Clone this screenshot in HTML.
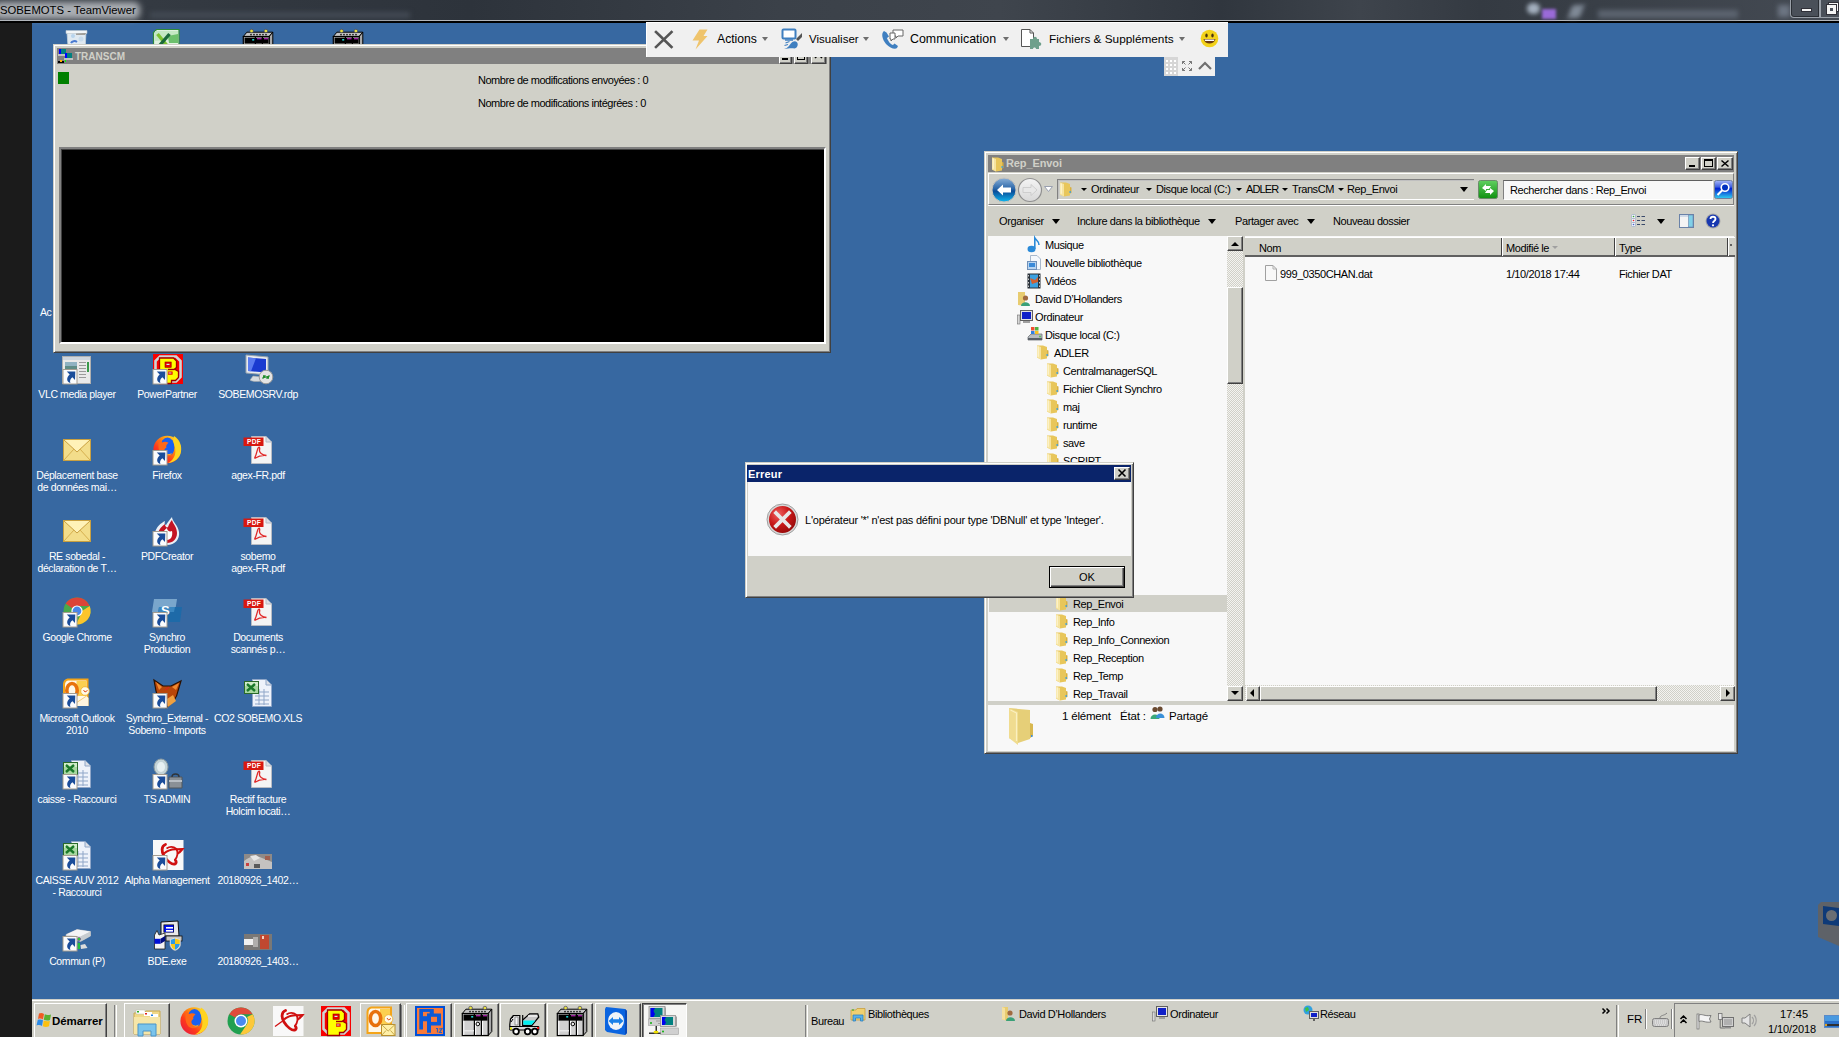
<!DOCTYPE html>
<html><head><meta charset="utf-8">
<style>
*{box-sizing:border-box}
html,body{margin:0;padding:0}
body{width:1839px;height:1037px;overflow:hidden;position:relative;background:#3768a1;font-family:"Liberation Sans",sans-serif;font-size:11px;color:#000}
.a{position:absolute}
.t{position:absolute;white-space:nowrap;font-size:11px;line-height:11px;letter-spacing:-0.4px}
svg{position:absolute;overflow:visible}
.win{background:#d0d0c8;border-top:1px solid #d0d0c8;border-left:1px solid #d0d0c8;border-right:1px solid #404040;border-bottom:1px solid #404040;box-shadow:inset 1px 1px 0 #fff,inset -1px -1px 0 #808080}
.title{background:#808080}
.tb{position:absolute;background:#d0d0c8;border-top:1px solid #fff;border-left:1px solid #fff;border-right:1px solid #404040;border-bottom:1px solid #404040;box-shadow:inset -1px -1px 0 #808080}
.sunk{position:absolute;border-top:1px solid #808080;border-left:1px solid #808080;border-right:1px solid #fff;border-bottom:1px solid #fff}
.lbl{position:absolute;color:#fff;font-size:10.5px;line-height:12px;text-align:center;width:100px;white-space:nowrap;letter-spacing:-0.38px}
.tvt{position:absolute;white-space:nowrap;font-size:12px;line-height:12px;color:#000}
.tri{position:absolute;width:0;height:0;border-left:3.5px solid transparent;border-right:3.5px solid transparent;border-top:4px solid #6d6d6d}
.btri{position:absolute;width:0;height:0;border-left:4px solid transparent;border-right:4px solid transparent;border-top:4px solid #000}
.nav{position:absolute;white-space:nowrap;font-size:11px;line-height:11px;letter-spacing:-0.4px}
</style></head><body>
<!-- ===== TOP BAR ===== -->
<div class="a" style="left:0;top:0;width:1839px;height:20px;background:linear-gradient(90deg,#3a3f47 0px,#343a42 150px,#2d333b 470px,#3b4149 780px,#3f454d 1000px,#30363e 1220px,#3e444c 1360px,#343a42 1480px,#3a4048 1620px,#454b54 1839px)"></div>
<div class="a" style="left:-6px;top:2px;width:146px;height:17px;background:#aaaeb3;filter:blur(3px);border-radius:6px"></div>
<div class="t" style="left:0;top:5px;font-size:11.3px;letter-spacing:0;color:#000">SOBEMOTS - TeamViewer</div>
<div class="a" style="left:0;top:20px;width:1839px;height:1px;background:#b2b6bb"></div>
<div class="a" style="left:0;top:21px;width:1839px;height:2px;background:#000"></div>
<div class="a" style="left:0;top:23px;width:32px;height:1014px;background:#1b1b1b"></div>
<!-- blurred tray items top right -->
<div class="a" style="left:150px;top:12px;width:260px;height:6px;background:#434a54;filter:blur(2.5px)"></div>
<div class="a" style="left:1527px;top:3px;width:13px;height:11px;border-radius:6px;background:#a4b0bf;filter:blur(2px)"></div>
<div class="a" style="left:1542px;top:9px;width:14px;height:10px;background:#9a6ad8;filter:blur(1.5px)"></div>
<div class="a" style="left:1570px;top:5px;width:12px;height:13px;background:#7f8996;filter:blur(2.5px);transform:skewX(-20deg)"></div>
<div class="a" style="left:1598px;top:10px;width:140px;height:8px;background:#5c6470;filter:blur(2.5px)"></div>
<div class="a" style="left:1778px;top:5px;width:12px;height:12px;background:#6c7582;filter:blur(2.5px)"></div>
<!-- min / restore buttons -->
<div class="a" style="left:1790px;top:-4px;width:30px;height:22px;border:1px solid #9aa0a8;border-top:none;border-radius:0 0 0 4px;background:#4a5059;box-shadow:inset 0 0 0 1px #2a2e34"></div>
<div class="a" style="left:1801px;top:8px;width:11px;height:4px;background:#f4f4f4;border:1px solid #303038"></div>
<div class="a" style="left:1820px;top:-4px;width:22px;height:22px;border:1px solid #9aa0a8;border-top:none;background:#4a5059"></div>
<div class="a" style="left:1829px;top:3px;width:9px;height:8px;border:2px solid #f4f4f4;border-left-width:2px;box-shadow:0 0 0 1px #303038"></div>
<div class="a" style="left:1827px;top:5px;width:9px;height:9px;border:3px solid #f4f4f4;background:#4a5059;box-shadow:0 0 0 1px #303038"></div>

<!-- ===== DESKTOP ICONS (top peeks) ===== -->
<svg style="left:61px;top:353px" width="32" height="32" viewBox="0 0 32 32"><rect x="1.5" y="3.5" width="28" height="27" fill="#e9e9e9" stroke="#b0b0b0"/><rect x="2" y="4" width="27" height="3" fill="#cfd6de"/><rect x="4" y="9" width="12" height="12" fill="#5e8c86"/><rect x="4" y="9" width="12" height="4" fill="#8fb2c2"/><g fill="#9a9a9a"><rect x="18" y="9" width="7" height="1"/><rect x="18" y="12" width="7" height="1"/><rect x="18" y="15" width="7" height="1"/><rect x="18" y="18" width="7" height="1"/><rect x="18" y="21" width="7" height="1"/><rect x="18" y="24" width="7" height="1"/></g><rect x="26" y="9" width="2" height="10" fill="#3a9a4a"/><g><rect x="2" y="16.5" width="14" height="14.5" fill="#fbfcfd" stroke="#a49c90" stroke-width="1"/><path d="M5.8 18.6 L14.3 18.6 L14 27 L11.4 24.2 C9.2 25.8 8.6 27.8 9.4 30 C5.6 29 4.9 25 8.7 21.6 Z" fill="#1b4d9a"/></g></svg>
<div class="lbl" style="left:27px;top:388px">VLC media player</div>
<svg style="left:61px;top:434px" width="32" height="32" viewBox="0 0 32 32"><rect x="2.5" y="5.5" width="27" height="21" fill="#f3dd8a" stroke="#c9a040"/><path d="M3 6 L16 18 L29 6" fill="#fff2b8" stroke="#c9a040"/><path d="M3 26 L13 15 M29 26 L19 15" stroke="#d6b050" fill="none"/></svg>
<div class="lbl" style="left:27px;top:469px">Déplacement base<br>de données mai…</div>
<svg style="left:61px;top:515px" width="32" height="32" viewBox="0 0 32 32"><rect x="2.5" y="5.5" width="27" height="21" fill="#f3dd8a" stroke="#c9a040"/><path d="M3 6 L16 18 L29 6" fill="#fff2b8" stroke="#c9a040"/><path d="M3 26 L13 15 M29 26 L19 15" stroke="#d6b050" fill="none"/></svg>
<div class="lbl" style="left:27px;top:550px">RE sobedal -<br>déclaration de T…</div>
<svg style="left:61px;top:596px" width="32" height="32" viewBox="0 0 32 32"><circle cx="16" cy="15" r="13.5" fill="#4aa84a"/><path d="M16 1.5 A13.5 13.5 0 0 1 28.7 10 L16 10 A5 5 0 0 0 11.5 12.5 L4.6 7.6 A13.5 13.5 0 0 1 16 1.5Z" fill="#dc4438"/><path d="M28.7 10 A13.5 13.5 0 0 1 15 28.5 L20.3 17.5 A5 5 0 0 0 21 15 Z" fill="#fbc42c"/><circle cx="16" cy="15" r="5.6" fill="#fff"/><circle cx="16" cy="15" r="4.4" fill="#4a86e8"/><g><rect x="2" y="16.5" width="14" height="14.5" fill="#fbfcfd" stroke="#a49c90" stroke-width="1"/><path d="M5.8 18.6 L14.3 18.6 L14 27 L11.4 24.2 C9.2 25.8 8.6 27.8 9.4 30 C5.6 29 4.9 25 8.7 21.6 Z" fill="#1b4d9a"/></g></svg>
<div class="lbl" style="left:27px;top:631px">Google Chrome</div>
<svg style="left:61px;top:677px" width="32" height="32" viewBox="0 0 32 32"><g transform="translate(1.5,1)"><path d="M5 0.5 L26 0.5 L26 28 L0.5 28 L0.5 6 C0.5 3 2.5 1 5 0.5Z" fill="#f4a418"/><path d="M5.5 2.5 L24 2.5 L24 26 L2.5 26 L2.5 7 C2.5 4.5 3.5 3 5.5 2.5Z" fill="#fff8e8"/><path d="M14 3 L24 3 L24 18 L14 18Z" fill="#fcd050"/><ellipse cx="9.5" cy="12.5" rx="5.2" ry="7" fill="none" stroke="#e8720c" stroke-width="3.6"/><circle cx="22.5" cy="13" r="4.3" fill="#fffbe8" stroke="#f0b030" stroke-width=".8"/><path d="M21 12 L22.5 14 L25 12.5" stroke="#e05020" stroke-width="1" fill="none"/><path d="M12 26 L24 18 L26 20 L26 28 L12 28Z" fill="#fff6e0"/><path d="M12 26 L24 18" stroke="#f0c060" stroke-width=".8"/></g><g><rect x="2" y="16.5" width="14" height="14.5" fill="#fbfcfd" stroke="#a49c90" stroke-width="1"/><path d="M5.8 18.6 L14.3 18.6 L14 27 L11.4 24.2 C9.2 25.8 8.6 27.8 9.4 30 C5.6 29 4.9 25 8.7 21.6 Z" fill="#1b4d9a"/></g></svg>
<div class="lbl" style="left:27px;top:712px">Microsoft Outlook<br>2010</div>
<svg style="left:61px;top:758px" width="32" height="32" viewBox="0 0 32 32"><path d="M10.5 2.5 L24 2.5 L29.5 8 L29.5 29.5 L10.5 29.5Z" fill="#eef2fa" stroke="#8fa6c8"/><path d="M24 2.5 L24 8 L29.5 8" fill="#dde0e6" stroke="#8fa6c8"/><g stroke="#8fa6c8" stroke-width="1"><path d="M13 15 L27 15 M13 19 L27 19 M13 23 L27 23 M13 27 L27 27 M17 12 L17 28 M22 12 L22 28"/></g><rect x="2.5" y="4.5" width="14" height="12" fill="#a8d8a0" stroke="#2a6a2a"/><rect x="3" y="5" width="13" height="4" fill="#d0ecc8"/><path d="M5 7 L13 14 M13 7 L5 14" stroke="#1a7a2a" stroke-width="2.4"/><g><rect x="2" y="16.5" width="14" height="14.5" fill="#fbfcfd" stroke="#a49c90" stroke-width="1"/><path d="M5.8 18.6 L14.3 18.6 L14 27 L11.4 24.2 C9.2 25.8 8.6 27.8 9.4 30 C5.6 29 4.9 25 8.7 21.6 Z" fill="#1b4d9a"/></g></svg>
<div class="lbl" style="left:27px;top:793px">caisse - Raccourci</div>
<svg style="left:61px;top:839px" width="32" height="32" viewBox="0 0 32 32"><path d="M10.5 2.5 L24 2.5 L29.5 8 L29.5 29.5 L10.5 29.5Z" fill="#eef2fa" stroke="#8fa6c8"/><path d="M24 2.5 L24 8 L29.5 8" fill="#dde0e6" stroke="#8fa6c8"/><g stroke="#8fa6c8" stroke-width="1"><path d="M13 15 L27 15 M13 19 L27 19 M13 23 L27 23 M13 27 L27 27 M17 12 L17 28 M22 12 L22 28"/></g><rect x="2.5" y="4.5" width="14" height="12" fill="#a8d8a0" stroke="#2a6a2a"/><rect x="3" y="5" width="13" height="4" fill="#d0ecc8"/><path d="M5 7 L13 14 M13 7 L5 14" stroke="#1a7a2a" stroke-width="2.4"/><g><rect x="2" y="16.5" width="14" height="14.5" fill="#fbfcfd" stroke="#a49c90" stroke-width="1"/><path d="M5.8 18.6 L14.3 18.6 L14 27 L11.4 24.2 C9.2 25.8 8.6 27.8 9.4 30 C5.6 29 4.9 25 8.7 21.6 Z" fill="#1b4d9a"/></g></svg>
<div class="lbl" style="left:27px;top:874px">CAISSE AUV 2012<br>- Raccourci</div>
<svg style="left:61px;top:920px" width="32" height="32" viewBox="0 0 32 32"><path d="M5 14.5 L16 9.5 L29.5 11.5 L29.5 16 L19.5 21.5 L5 17Z" fill="#d8dade" stroke="#b0b4b8" stroke-width=".6"/><path d="M5 14.5 L16 9.5 L29.5 11.5 L19.5 16.5Z" fill="#f4f4f6"/><path d="M19.5 16.5 L29.5 11.5 L29.5 16 L19.5 21.5Z" fill="#c8ccd0"/><circle cx="18" cy="19" r="1.6" fill="#30d030" stroke="#6a2a8a" stroke-width=".5"/><path d="M16.5 23 L16.5 29 L19 29 L19 23Z" fill="#20c040"/><path d="M19.5 25 L24 24 L26.5 28 L20 29Z" fill="#dcdcdc"/><g><rect x="2" y="16.5" width="14" height="14.5" fill="#fbfcfd" stroke="#a49c90" stroke-width="1"/><path d="M5.8 18.6 L14.3 18.6 L14 27 L11.4 24.2 C9.2 25.8 8.6 27.8 9.4 30 C5.6 29 4.9 25 8.7 21.6 Z" fill="#1b4d9a"/></g></svg>
<div class="lbl" style="left:27px;top:955px">Commun (P)</div>
<svg style="left:151px;top:353px" width="32" height="32" viewBox="0 0 32 32"><rect x="2" y="1" width="30" height="30" fill="#f80000"/><path d="M9 3.5 L25 3.5 L29.5 8 L29.5 24 L25 28.5 L9 28.5 L4.5 24 L4.5 8Z" fill="none" stroke="#cfd4d4" stroke-width="2.6"/><path d="M8.5 5 L22.5 5 L25.5 8 L25.5 14.5 L23.5 16.2 L27.5 18.5 L27.5 24.5 L24.5 27.5 L20.5 27.5 L20.5 30.5 L8.5 30.5 Z" fill="#ffff00" stroke="#a00000" stroke-width="1.3"/><rect x="14" y="9" width="6.2" height="5.3" fill="#e80000" stroke="#900000" stroke-width=".6"/><rect x="15.5" y="10.8" width="3" height="1.2" fill="#c8f0f0"/><path d="M17 16.5 L23.5 16.5" stroke="#a00000" stroke-width="1.4"/><rect x="17" y="18.5" width="4.6" height="3.2" fill="#e80000"/><rect x="17.5" y="19.5" width="3" height="1" fill="#c8f0f0"/><g><rect x="2" y="16.5" width="14" height="14.5" fill="#fbfcfd" stroke="#a49c90" stroke-width="1"/><path d="M5.8 18.6 L14.3 18.6 L14 27 L11.4 24.2 C9.2 25.8 8.6 27.8 9.4 30 C5.6 29 4.9 25 8.7 21.6 Z" fill="#1b4d9a"/></g></svg>
<div class="lbl" style="left:117px;top:388px">PowerPartner</div>
<svg style="left:151px;top:434px" width="32" height="32" viewBox="0 0 32 32"><g transform="translate(2,0.5)"><defs><linearGradient id="fxa" x1="0" y1="1" x2="1" y2="0"><stop offset="0" stop-color="#e0104a"/><stop offset=".35" stop-color="#ff3a1a"/><stop offset=".65" stop-color="#ff9a10"/><stop offset="1" stop-color="#fff040"/></linearGradient></defs><circle cx="14.2" cy="15" r="13.8" fill="url(#fxa)"/><ellipse cx="14.5" cy="12.5" rx="7" ry="9.5" fill="#1a60f0"/><path d="M21 1.5 C27 5 29 12 28 17 C27 24 21 28 15 28.5 C20 26 23 21 22.3 15 C21.8 10 19 7 21 1.5Z" fill="#ffd420"/><path d="M6.5 5 L9 8 C11 7 13.5 7 15.5 8.2 C14 10 12.5 11 13.5 13 C11.5 14 10.5 16 12.5 18.5 C14.5 20.5 18 20.5 20.5 19.5 C17.5 22.5 12 23.5 8.5 20.5 C5.5 17 4.5 11 6.5 5Z" fill="#ff6818"/><path d="M12 18.5 C14 20 17 20 19 18.5 C18 21 15 21.5 12 18.5Z" fill="#ffb020"/></g><g><rect x="2" y="16.5" width="14" height="14.5" fill="#fbfcfd" stroke="#a49c90" stroke-width="1"/><path d="M5.8 18.6 L14.3 18.6 L14 27 L11.4 24.2 C9.2 25.8 8.6 27.8 9.4 30 C5.6 29 4.9 25 8.7 21.6 Z" fill="#1b4d9a"/></g></svg>
<div class="lbl" style="left:117px;top:469px">Firefox</div>
<svg style="left:151px;top:515px" width="32" height="32" viewBox="0 0 32 32"><path d="M16 30 C7 30 3 24 4 18 C5 12 10 8 14 6 C13 9 14 10 15 10 C17 7 19 4 21 2 C21 6 27 10 28 17 C29 24 24 30 16 30Z" fill="#fff" opacity=".9"/><path d="M16 28 C9 28 6 23 7 18 C8 14 11 11 14 9 C14 12 16 13 17 12 C18 9 20 6 21 5 C22 9 26 12 26 18 C26 24 22 28 16 28Z" fill="#c41424"/><path d="M16 25 C12 25 10 22 11 19 C12 16 14 15 16 13 C16 16 19 17 21 16 C22 21 20 25 16 25Z" fill="#fff"/><g><rect x="2" y="16.5" width="14" height="14.5" fill="#fbfcfd" stroke="#a49c90" stroke-width="1"/><path d="M5.8 18.6 L14.3 18.6 L14 27 L11.4 24.2 C9.2 25.8 8.6 27.8 9.4 30 C5.6 29 4.9 25 8.7 21.6 Z" fill="#1b4d9a"/></g></svg>
<div class="lbl" style="left:117px;top:550px">PDFCreator</div>
<svg style="left:151px;top:596px" width="32" height="32" viewBox="0 0 32 32"><path d="M3 3 L26 3 L24 16 L1 16Z" fill="#7aa6cc"/><path d="M8 11 L31 11 L29 26 L6 26Z" fill="#1e6aa8"/><path d="M8 11 L24 11 L23 16 L7 16Z" fill="#3a86c0"/><text x="10" y="19" font-family="Liberation Sans" font-weight="bold" font-size="13" fill="#fff">S</text><g><rect x="2" y="16.5" width="14" height="14.5" fill="#fbfcfd" stroke="#a49c90" stroke-width="1"/><path d="M5.8 18.6 L14.3 18.6 L14 27 L11.4 24.2 C9.2 25.8 8.6 27.8 9.4 30 C5.6 29 4.9 25 8.7 21.6 Z" fill="#1b4d9a"/></g></svg>
<div class="lbl" style="left:117px;top:631px">Synchro<br>Production</div>
<svg style="left:151px;top:677px" width="32" height="32" viewBox="0 0 32 32"><path d="M3 3 L12 9 L20 9 L30 4 L27 14 C26 20 22 26 15 31 C12 26 6 20 5 14Z" fill="#b8460a" stroke="#2a1000" stroke-width="1.2"/><path d="M5 5 L11 10 L8 13Z" fill="#f08a30"/><path d="M28 6 L21 10 L25 13Z" fill="#f08a30"/><path d="M16 22 L22 18 L25 24 L17 30Z" fill="#f0a040"/><path d="M14 13 L18 10" stroke="#e02020" stroke-width="1"/><g><rect x="2" y="16.5" width="14" height="14.5" fill="#fbfcfd" stroke="#a49c90" stroke-width="1"/><path d="M5.8 18.6 L14.3 18.6 L14 27 L11.4 24.2 C9.2 25.8 8.6 27.8 9.4 30 C5.6 29 4.9 25 8.7 21.6 Z" fill="#1b4d9a"/></g></svg>
<div class="lbl" style="left:117px;top:712px">Synchro_External -<br>Sobemo - Imports</div>
<svg style="left:151px;top:758px" width="32" height="32" viewBox="0 0 32 32"><ellipse cx="10" cy="9" rx="7" ry="8" fill="#c4d4d8" stroke="#8a9aa0"/><ellipse cx="10" cy="9" rx="4" ry="5" fill="#e6f0f2"/><path d="M18 19 L31 19 L31 30 L18 30Z" fill="#8a9096" stroke="#50565c"/><path d="M21 19 C21 15 28 15 28 19" fill="none" stroke="#303438" stroke-width="1.4"/><rect x="18" y="22" width="13" height="2" fill="#b8bec4"/><g><rect x="2" y="16.5" width="14" height="14.5" fill="#fbfcfd" stroke="#a49c90" stroke-width="1"/><path d="M5.8 18.6 L14.3 18.6 L14 27 L11.4 24.2 C9.2 25.8 8.6 27.8 9.4 30 C5.6 29 4.9 25 8.7 21.6 Z" fill="#1b4d9a"/></g></svg>
<div class="lbl" style="left:117px;top:793px">TS ADMIN</div>
<svg style="left:151px;top:839px" width="32" height="32" viewBox="0 0 32 32"><g transform="translate(2,1)"><rect x="0" y="0" width="30.5" height="30" fill="#f8f8f8"/><path d="M12.5 4.5 C8 6 8.5 12 11 16 C14 21 19 25 22 24 C23.5 23 23.5 21.5 22.5 20.5" stroke="#d01010" stroke-width="2.8" fill="none" stroke-linecap="round"/><path d="M2 20.5 L11 14" stroke="#d01010" stroke-width="1.3"/><path d="M11 13.5 C15 10 20 9 24 9.3 C27 9 29 9 29.5 9 C28 11 26.5 12.5 24.5 13.5" stroke="#d01010" stroke-width="2.2" fill="none"/><path d="M13.5 8.5 C16.5 6.5 20.5 6.5 23.5 9 C25 12 25 17 21.5 20.5" stroke="#d01010" stroke-width="1.8" fill="none"/></g><g><rect x="2" y="16.5" width="14" height="14.5" fill="#fbfcfd" stroke="#a49c90" stroke-width="1"/><path d="M5.8 18.6 L14.3 18.6 L14 27 L11.4 24.2 C9.2 25.8 8.6 27.8 9.4 30 C5.6 29 4.9 25 8.7 21.6 Z" fill="#1b4d9a"/></g></svg>
<div class="lbl" style="left:117px;top:874px">Alpha Management</div>
<svg style="left:151px;top:920px" width="32" height="32" viewBox="0 0 32 32"><path d="M10 2 L27 1 L28 16 L10 16Z" fill="#e8e8e8" stroke="#101010" stroke-width="1"/><rect x="12.5" y="4.5" width="10.5" height="8" fill="#000"/><rect x="13.2" y="5.2" width="9.3" height="7" fill="#0010f0"/><rect x="15" y="7" width="7" height="1.6" fill="#fff"/><rect x="15" y="10" width="7" height="1.6" fill="#fff"/><rect x="15" y="16" width="16" height="5" fill="#c8c8c8" stroke="#101010" stroke-width=".8"/><path d="M3.5 15 L6 10.5 L8 15 L14 13 L14 29 L3.5 29Z" fill="#f4f4f4" stroke="#202020" stroke-width=".8"/><rect x="3.5" y="18.8" width="6" height="5" fill="#0010d8"/><path d="M9.5 18.8 L14 16 L14 21 L9.5 23.8Z" fill="#000a80"/><path d="M19 19 L24 17.5 L29.5 19 L29.5 25 C29 28 26 30 24 30.5 C22 30 19.5 28 19 25Z" fill="#f0f0f0" stroke="#c0c0c0" stroke-width=".6"/><path d="M19.8 19.8 L24 18.5 L24 24 L19.8 24Z M24 24 L28.8 24 C28.5 27 26 29 24 29.7Z" fill="#2a9ae8"/><path d="M24 18.5 L28.8 19.8 L28.8 24 L24 24Z M19.8 24 L24 24 L24 29.7 C22 29 20 27 19.8 24Z" fill="#f8c818"/></svg>
<div class="lbl" style="left:117px;top:955px">BDE.exe</div>
<svg style="left:242px;top:353px" width="32" height="32" viewBox="0 0 32 32"><path d="M4 2 L26 4 L26 22 L4 20Z" fill="#e8ecf0" stroke="#9aa4ae"/><path d="M6 4.5 L24 6 L24 19.5 L6 18Z" fill="#1a3bd0"/><path d="M6 4.5 L14 5.2 L9 18.3 L6 18Z" fill="#5a7cf0"/><path d="M11 23 L20 24 L22 27 C18 29 10 29 8 27Z" fill="#d8dce0" stroke="#a0a4a8" stroke-width=".6"/><circle cx="24" cy="24" r="6.8" fill="#e4e4e4" stroke="#9a9a9a"/><path d="M20.5 25.5 L23 23 M25 25 L27.5 22.5 M21 23 L23 23 L23 25 M27 25 L25 25 L25 23" stroke="#1e8c2a" stroke-width="1.4" fill="none"/></svg>
<div class="lbl" style="left:208px;top:388px">SOBEMOSRV.rdp</div>
<svg style="left:242px;top:434px" width="32" height="32" viewBox="0 0 32 32"><path d="M9.5 2.5 L24 2.5 L29.5 8 L29.5 29.5 L9.5 29.5Z" fill="#f4f4f4" stroke="#b8bcc4"/><path d="M24 2.5 L24 8 L29.5 8" fill="#dde0e6" stroke="#b8bcc4"/><rect x="1.5" y="3.5" width="20" height="8.5" fill="#d81810"/><text x="5" y="10.3" font-family="Liberation Sans" font-weight="bold" font-size="6.6" fill="#fff" letter-spacing="0.3">PDF</text><path d="M16.5 13.5 C15 15 15.5 18 12.5 24.5 M16.5 13.5 C17.5 12.5 18 14 17.5 16 C17 18.5 20 21 24.5 21.5 C21 21 16.5 22 12.5 24.5" stroke="#e02828" stroke-width="1.3" fill="none"/></svg>
<div class="lbl" style="left:208px;top:469px">agex-FR.pdf</div>
<svg style="left:242px;top:515px" width="32" height="32" viewBox="0 0 32 32"><path d="M9.5 2.5 L24 2.5 L29.5 8 L29.5 29.5 L9.5 29.5Z" fill="#f4f4f4" stroke="#b8bcc4"/><path d="M24 2.5 L24 8 L29.5 8" fill="#dde0e6" stroke="#b8bcc4"/><rect x="1.5" y="3.5" width="20" height="8.5" fill="#d81810"/><text x="5" y="10.3" font-family="Liberation Sans" font-weight="bold" font-size="6.6" fill="#fff" letter-spacing="0.3">PDF</text><path d="M16.5 13.5 C15 15 15.5 18 12.5 24.5 M16.5 13.5 C17.5 12.5 18 14 17.5 16 C17 18.5 20 21 24.5 21.5 C21 21 16.5 22 12.5 24.5" stroke="#e02828" stroke-width="1.3" fill="none"/></svg>
<div class="lbl" style="left:208px;top:550px">sobemo<br>agex-FR.pdf</div>
<svg style="left:242px;top:596px" width="32" height="32" viewBox="0 0 32 32"><path d="M9.5 2.5 L24 2.5 L29.5 8 L29.5 29.5 L9.5 29.5Z" fill="#f4f4f4" stroke="#b8bcc4"/><path d="M24 2.5 L24 8 L29.5 8" fill="#dde0e6" stroke="#b8bcc4"/><rect x="1.5" y="3.5" width="20" height="8.5" fill="#d81810"/><text x="5" y="10.3" font-family="Liberation Sans" font-weight="bold" font-size="6.6" fill="#fff" letter-spacing="0.3">PDF</text><path d="M16.5 13.5 C15 15 15.5 18 12.5 24.5 M16.5 13.5 C17.5 12.5 18 14 17.5 16 C17 18.5 20 21 24.5 21.5 C21 21 16.5 22 12.5 24.5" stroke="#e02828" stroke-width="1.3" fill="none"/></svg>
<div class="lbl" style="left:208px;top:631px">Documents<br>scannés p…</div>
<svg style="left:242px;top:677px" width="32" height="32" viewBox="0 0 32 32"><path d="M10.5 2.5 L24 2.5 L29.5 8 L29.5 29.5 L10.5 29.5Z" fill="#eef2fa" stroke="#8fa6c8"/><path d="M24 2.5 L24 8 L29.5 8" fill="#dde0e6" stroke="#8fa6c8"/><g stroke="#8fa6c8" stroke-width="1"><path d="M13 15 L27 15 M13 19 L27 19 M13 23 L27 23 M13 27 L27 27 M17 12 L17 28 M22 12 L22 28"/></g><rect x="2.5" y="4.5" width="14" height="12" fill="#a8d8a0" stroke="#2a6a2a"/><rect x="3" y="5" width="13" height="4" fill="#d0ecc8"/><path d="M5 7 L13 14 M13 7 L5 14" stroke="#1a7a2a" stroke-width="2.4"/></svg>
<div class="lbl" style="left:208px;top:712px">CO2 SOBEMO.XLS</div>
<svg style="left:242px;top:758px" width="32" height="32" viewBox="0 0 32 32"><path d="M9.5 2.5 L24 2.5 L29.5 8 L29.5 29.5 L9.5 29.5Z" fill="#f4f4f4" stroke="#b8bcc4"/><path d="M24 2.5 L24 8 L29.5 8" fill="#dde0e6" stroke="#b8bcc4"/><rect x="1.5" y="3.5" width="20" height="8.5" fill="#d81810"/><text x="5" y="10.3" font-family="Liberation Sans" font-weight="bold" font-size="6.6" fill="#fff" letter-spacing="0.3">PDF</text><path d="M16.5 13.5 C15 15 15.5 18 12.5 24.5 M16.5 13.5 C17.5 12.5 18 14 17.5 16 C17 18.5 20 21 24.5 21.5 C21 21 16.5 22 12.5 24.5" stroke="#e02828" stroke-width="1.3" fill="none"/></svg>
<div class="lbl" style="left:208px;top:793px">Rectif facture<br>Holcim locati…</div>
<svg style="left:242px;top:839px" width="32" height="32" viewBox="0 0 32 32"><rect x="2" y="15" width="28" height="15" fill="#8e8a88"/><path d="M2 22 C8 17 14 16 20 19 L30 23 L30 30 L2 30Z" fill="#c4c2c0"/><path d="M8 17 L14 16 L18 19 L12 22Z" fill="#e8e6e4"/><rect x="4" y="24" width="3" height="3" fill="#c84040"/><rect x="23" y="17" width="5" height="4" fill="#a06050"/><rect x="12" y="25" width="6" height="4" fill="#5a5a5a"/></svg>
<div class="lbl" style="left:208px;top:874px">20180926_1402…</div>
<svg style="left:242px;top:920px" width="32" height="32" viewBox="0 0 32 32"><rect x="2" y="14" width="28" height="16" fill="#7a7876"/><rect x="2" y="19" width="9" height="6" fill="#f0f0f0"/><rect x="11" y="17" width="5" height="10" fill="#b0aeac"/><rect x="18" y="15" width="9" height="14" fill="#c04830"/><rect x="20" y="16" width="2" height="3" fill="#f0d0c0"/></svg>
<div class="lbl" style="left:208px;top:955px">20180926_1403…</div>
<svg style="left:61px;top:29px" width="32" height="32" viewBox="0 0 32 32"><path d="M6 3 L25 3 L23.5 31 L8 31Z" fill="#dfe9f1" stroke="#c8d4dc" stroke-width=".8"/><path d="M5 1.5 L26 1.5 L26 4.5 L5 4.5Z" fill="#f2f6f8" stroke="#b8c4cc" stroke-width=".6"/><path d="M15 4.5 L25 4 L24 6 L15 6Z" fill="#7a7060" opacity=".6"/><circle cx="12" cy="7" r="2" fill="#b8d4ec"/><circle cx="20" cy="10" r="2.5" fill="#c8dcec"/><path d="M10 14 C11 12 14 11.5 16 13" stroke="#4a7ad0" stroke-width="2" fill="none"/></svg>
<svg style="left:151px;top:29px" width="32" height="32" viewBox="0 0 32 32"><path d="M5.5 0.5 L28 0.5 L28 32 L2.5 32 L2.5 3.5 Z" fill="#dff2df" stroke="#2f8a3a" stroke-width="1.2"/><path d="M4 2 L27 2 L27 10 L4 12Z" fill="#c4e8c4"/><path d="M17 7 L27 5 L27 14 L18 14Z" fill="#6cc06c"/><path d="M6.5 5 L15.5 16" stroke="#7cc230" stroke-width="3.4"/><path d="M18.5 5 L9 16" stroke="#1b6a3a" stroke-width="3.4"/></svg>
<svg style="left:242px;top:29px" width="32" height="32" viewBox="0 0 32 32"><path d="M1.3 7.5 L4.9 3.2 L30.8 3.2 L27.2 7.5Z" fill="#c4c4c4" stroke="#000" stroke-width="1"/><g fill="#202020"><circle cx="9" cy="5.6" r=".9"/><circle cx="12" cy="5.6" r=".9"/><circle cx="15" cy="5.6" r=".9"/><circle cx="18" cy="5.6" r=".9"/><circle cx="21" cy="5.6" r=".9"/><circle cx="24" cy="5.6" r=".9"/></g><path d="M27.2 7.5 L30.8 3.2 L30.8 25.5 L27.2 29.5Z" fill="#a8a8a8" stroke="#000" stroke-width="1"/><rect x="1.3" y="7.5" width="25.9" height="22" fill="#d0d0d0" stroke="#000" stroke-width="1.2"/><rect x="2.5" y="8.6" width="24" height="6" fill="#000"/><path d="M13.4 8 L13.4 29 M20.4 8 L20.4 29" stroke="#000" stroke-width="1.2"/><path d="M2.8 15 L2.8 29 M14.6 15 L14.6 29 M21.6 15 L21.6 29" stroke="#fff" stroke-width="1"/><rect x="10.2" y="10" width="2" height="1.6" fill="#20d0d0"/><rect x="15" y="9" width="4.5" height="1.4" fill="#a020a0"/><rect x="22" y="9" width="4" height="1.4" fill="#a020a0"/><circle cx="16.8" cy="18" r="1.8" fill="#f0f0f0" stroke="#000" stroke-width="1"/><rect x="3" y="24" width="10" height="1.5" fill="#e8e8e8"/><ellipse cx="9.6" cy="2" rx="1.9" ry="1.7" fill="#e8e040" stroke="#303060" stroke-width=".6"/><ellipse cx="23.9" cy="2" rx="1.9" ry="1.7" fill="#e8e040" stroke="#303060" stroke-width=".6"/></svg>
<svg style="left:332px;top:29px" width="32" height="32" viewBox="0 0 32 32"><path d="M1.3 7.5 L4.9 3.2 L30.8 3.2 L27.2 7.5Z" fill="#c4c4c4" stroke="#000" stroke-width="1"/><g fill="#202020"><circle cx="9" cy="5.6" r=".9"/><circle cx="12" cy="5.6" r=".9"/><circle cx="15" cy="5.6" r=".9"/><circle cx="18" cy="5.6" r=".9"/><circle cx="21" cy="5.6" r=".9"/><circle cx="24" cy="5.6" r=".9"/></g><path d="M27.2 7.5 L30.8 3.2 L30.8 25.5 L27.2 29.5Z" fill="#a8a8a8" stroke="#000" stroke-width="1"/><rect x="1.3" y="7.5" width="25.9" height="22" fill="#d0d0d0" stroke="#000" stroke-width="1.2"/><rect x="2.5" y="8.6" width="24" height="6" fill="#000"/><path d="M13.4 8 L13.4 29 M20.4 8 L20.4 29" stroke="#000" stroke-width="1.2"/><path d="M2.8 15 L2.8 29 M14.6 15 L14.6 29 M21.6 15 L21.6 29" stroke="#fff" stroke-width="1"/><rect x="10.2" y="10" width="2" height="1.6" fill="#20d0d0"/><rect x="15" y="9" width="4.5" height="1.4" fill="#a020a0"/><rect x="22" y="9" width="4" height="1.4" fill="#a020a0"/><circle cx="16.8" cy="18" r="1.8" fill="#f0f0f0" stroke="#000" stroke-width="1"/><rect x="3" y="24" width="10" height="1.5" fill="#e8e8e8"/><ellipse cx="9.6" cy="2" rx="1.9" ry="1.7" fill="#e8e040" stroke="#303060" stroke-width=".6"/><ellipse cx="23.9" cy="2" rx="1.9" ry="1.7" fill="#e8e040" stroke="#303060" stroke-width=".6"/></svg>
<div class="lbl" style="left:-9px;top:306px;width:150px;text-align:left;padding-left:49px">Ac</div>
<div class="a" style="left:1818px;top:902px;width:30px;height:48px;background:#5e6268;clip-path:polygon(3px 0,100% 0,100% 100%,0 35px,0 3px)"></div>
<div class="a" style="left:1823px;top:907px;width:16px;height:18px;background:#0e3a78;transform:skewY(8deg)"></div>
<div class="a" style="left:1826px;top:910px;width:11px;height:11px;border-radius:50%;background:#6a6e74"></div>

<!-- ===== TRANSCM WINDOW ===== -->
<div class="a win" style="left:53px;top:44px;width:778px;height:309px"></div>
<div class="a title" style="left:57px;top:48px;width:770px;height:16px"></div>
<svg style="left:58px;top:48px" width="16" height="16" viewBox="0 0 16 16">
<rect x="1" y="1" width="6" height="5" fill="#0000ff"/><rect x="3" y="1" width="5" height="5" fill="#008080"/><rect x="0" y="6" width="8" height="2" fill="#c0c0c0"/>
<rect x="7" y="5" width="6" height="5" fill="#0000ff"/><rect x="9" y="5" width="5" height="5" fill="#008080"/><rect x="6" y="10" width="9" height="2" fill="#c0c0c0"/>
<rect x="0" y="13" width="6" height="2" fill="#000"/><rect x="2" y="12" width="2" height="2" fill="#ffb000"/><rect x="7" y="12" width="1" height="2" fill="#00ff00"/>
</svg>
<div class="t" style="left:75px;top:51px;font-size:10px;font-weight:bold;letter-spacing:0;color:#d0d0c8">TRANSCM</div>
<div class="tb" style="left:779px;top:50px;width:13px;height:14px"></div>
<div class="a" style="left:782px;top:58px;width:6px;height:2px;background:#000"></div>
<div class="tb" style="left:794px;top:50px;width:14px;height:14px"></div>
<div class="a" style="left:797px;top:53px;width:8px;height:7px;border:1px solid #000;border-top-width:2px"></div>
<div class="tb" style="left:811px;top:50px;width:15px;height:14px"></div>
<svg style="left:814px;top:50px" width="9" height="9" viewBox="0 0 9 9"><path d="M1 1 L8 8 M8 1 L1 8" stroke="#000" stroke-width="1.5"/></svg>
<div class="a" style="left:58px;top:72px;width:11px;height:12px;background:#008000"></div>
<div class="t" style="left:478px;top:75px;letter-spacing:-0.47px">Nombre de modifications envoyées : 0</div>
<div class="t" style="left:478px;top:98px;letter-spacing:-0.47px">Nombre de modifications intégrées : 0</div>
<div class="a" style="left:59px;top:147px;width:767px;height:197px;background:#000;border-top:2px solid #808080;border-left:2px solid #808080;border-right:2px solid #fff;border-bottom:2px solid #fff;box-shadow:inset 1px 1px 0 #404040"></div>

<!-- ===== EXPLORER WINDOW ===== -->
<div class="a win" style="left:984px;top:151px;width:754px;height:603px"></div>
<div class="a title" style="left:988px;top:155px;width:746px;height:17px"></div>
<svg style="left:991px;top:156px" width="13" height="16" viewBox="0 0 13 16"><path d="M1 1.5 L7 1.5 L11 3 L11 14.5 L5 15.5 L1 13.5Z" fill="#e8c65a"/><path d="M1 1.5 L5 3 L5 15.5 L1 13.5Z" fill="#f6e4a0"/><path d="M2.2 2.5 L2.2 12.8" stroke="#fff7d8" stroke-width="1"/><path d="M11 6 L12.5 6.5 L12.5 12 L11 12.5Z" fill="#d8b040"/><rect x="10.5" y="10" width="1.3" height="2" fill="#3aa0e0"/></svg>
<div class="t" style="left:1006px;top:158px;font-weight:bold;letter-spacing:-0.1px;color:#d0d0c8">Rep_Envoi</div>
<div class="tb" style="left:1685px;top:157px;width:15px;height:13px"></div>
<div class="tb" style="left:1701px;top:157px;width:15px;height:13px"></div>
<div class="tb" style="left:1717px;top:157px;width:16px;height:13px"></div>
<div class="a" style="left:1689px;top:165px;width:6px;height:2px;background:#000"></div>
<div class="a" style="left:1704px;top:159px;width:9px;height:8px;border:1px solid #000;border-top-width:2px"></div>
<svg style="left:1721px;top:160px" width="8" height="7" viewBox="0 0 8 7"><path d="M0.5 0.5 L7.5 6.5 M7.5 0.5 L0.5 6.5" stroke="#000" stroke-width="1.5"/></svg>
<div class="a" style="left:988px;top:173px;width:746px;height:32px;border-top:1px solid #fff;border-left:1px solid #fff;border-bottom:1px solid #808080;border-right:1px solid #808080;background:#d0d0c8"></div>
<div class="a" style="left:988px;top:205px;width:746px;height:1px;background:#fff"></div>
<svg style="left:991px;top:177px" width="54" height="26" viewBox="0 0 54 26"><defs><linearGradient id="gb" x1="0" y1="0" x2="0" y2="1"><stop offset="0" stop-color="#8ab0d8"/><stop offset=".45" stop-color="#2a66a8"/><stop offset=".55" stop-color="#0a4c98"/><stop offset="1" stop-color="#10b8f0"/></linearGradient><linearGradient id="gf" x1="0" y1="0" x2="0" y2="1"><stop offset="0" stop-color="#f4f4f4"/><stop offset="1" stop-color="#d8d8d8"/></linearGradient></defs><circle cx="13" cy="13" r="12" fill="url(#gb)" stroke="#c8c4bc" stroke-width="1"/><path d="M6 13 L12 7.5 L12 10.5 L20 10.5 L20 15.5 L12 15.5 L12 18.5Z" fill="#fff"/><circle cx="39" cy="13" r="11.5" fill="url(#gf)" stroke="#909090" stroke-width="1.2"/><path d="M46 13 L40 7.5 L40 10.5 L32 10.5 L32 15.5 L40 15.5 L40 18.5Z" fill="#e8e8e8" stroke="#c8c8c8" stroke-width=".8"/></svg>
<svg style="left:1044px;top:186px" width="9" height="6" viewBox="0 0 9 6"><path d="M0.5 0.5 L8.5 0.5 L4.5 5.5Z" fill="#fff" stroke="#9aa0b0"/></svg>
<div class="a" style="left:1057px;top:179px;width:417px;height:21px;border-top:1px solid #808080;border-left:1px solid #808080;border-bottom:1px solid #fff;background:#d0d0c8;box-shadow:inset 1px 1px 0 #c0c0c0"></div>
<svg style="left:1059px;top:181px" width="13" height="16" viewBox="0 0 13 16"><path d="M1 1.5 L7 1.5 L11 3 L11 14.5 L5 15.5 L1 13.5Z" fill="#e8c65a"/><path d="M1 1.5 L5 3 L5 15.5 L1 13.5Z" fill="#f6e4a0"/><path d="M2.2 2.5 L2.2 12.8" stroke="#fff7d8" stroke-width="1"/><path d="M11 6 L12.5 6.5 L12.5 12 L11 12.5Z" fill="#d8b040"/><rect x="10.5" y="10" width="1.3" height="2" fill="#3aa0e0"/></svg>
<div class="btri" style="left:1081px;top:188px;border-left-width:3px;border-right-width:3px;border-top-width:3px"></div>
<div class="nav" style="left:1091px;top:184px;letter-spacing:-0.4px">Ordinateur</div>
<div class="btri" style="left:1146px;top:188px;border-left-width:3px;border-right-width:3px;border-top-width:3px"></div>
<div class="nav" style="left:1156px;top:184px;letter-spacing:-0.4px">Disque local (C:)</div>
<div class="btri" style="left:1236px;top:188px;border-left-width:3px;border-right-width:3px;border-top-width:3px"></div>
<div class="nav" style="left:1246px;top:184px;letter-spacing:-0.9px">ADLER</div>
<div class="btri" style="left:1282px;top:188px;border-left-width:3px;border-right-width:3px;border-top-width:3px"></div>
<div class="nav" style="left:1292px;top:184px;letter-spacing:-0.4px">TransCM</div>
<div class="btri" style="left:1338px;top:188px;border-left-width:3px;border-right-width:3px;border-top-width:3px"></div>
<div class="nav" style="left:1347px;top:184px;letter-spacing:-0.4px">Rep_Envoi</div>
<div class="btri" style="left:1460px;top:187px;border-left-width:4px;border-right-width:4px;border-top-width:5px"></div>
<svg style="left:1478px;top:180px" width="20" height="19" viewBox="0 0 20 19"><defs><linearGradient id="gr" x1="0" y1="0" x2="0" y2="1"><stop offset="0" stop-color="#60d060"/><stop offset="1" stop-color="#109010"/></linearGradient></defs><rect x="0.5" y="0.5" width="19" height="18" rx="2" fill="url(#gr)" stroke="#6a8a6a"/><path d="M4 8 L8 4 L8 6 L13 6 L11 9 L8 9 L8 11Z M16 11 L12 15 L12 13 L7 13 L9 10 L12 10 L12 8Z" fill="#fff"/></svg>
<div class="a" style="left:1503px;top:180px;width:210px;height:20px;background:#f8f8f8;border-top:1px solid #606060;border-left:1px solid #808080;border-bottom:1px solid #fff;border-right:1px solid #fff"></div>
<div class="nav" style="left:1510px;top:185px">Rechercher dans : Rep_Envoi</div>
<svg style="left:1714px;top:180px" width="19" height="19" viewBox="0 0 19 19"><defs><linearGradient id="gs" x1="0" y1="0" x2="0" y2="1"><stop offset="0" stop-color="#a8b8f8"/><stop offset=".35" stop-color="#4060e0"/><stop offset=".45" stop-color="#0020d0"/><stop offset="1" stop-color="#30d0f0"/></linearGradient></defs><rect x="0.5" y="0.5" width="18" height="18" rx="2" fill="url(#gs)" stroke="#7080a0"/><circle cx="11" cy="7.5" r="3.8" fill="#0030c0" stroke="#fff" stroke-width="1.6"/><path d="M8.2 10.3 L3.5 15" stroke="#fff" stroke-width="2"/></svg>
<div class="a" style="left:988px;top:206px;width:746px;height:30px;background:#d0d0c8"></div>
<div class="nav" style="left:999px;top:216px">Organiser</div>
<div class="btri" style="left:1052px;top:219px;border-left-width:4px;border-right-width:4px;border-top-width:5px"></div>
<div class="nav" style="left:1077px;top:216px">Inclure dans la bibliothèque</div>
<div class="btri" style="left:1208px;top:219px;border-left-width:4px;border-right-width:4px;border-top-width:5px"></div>
<div class="nav" style="left:1235px;top:216px">Partager avec</div>
<div class="btri" style="left:1307px;top:219px;border-left-width:4px;border-right-width:4px;border-top-width:5px"></div>
<div class="nav" style="left:1333px;top:216px">Nouveau dossier</div>
<svg style="left:1631px;top:214px" width="15" height="14" viewBox="0 0 15 14"><g fill="#f0f0f8" stroke="#a0b0c8" stroke-width=".8"><rect x=".5" y=".5" width="4" height="4" rx="1"/><rect x=".5" y="4.5" width="4" height="4" rx="1"/><rect x=".5" y="8.5" width="4" height="4" rx="1"/></g><circle cx="2.5" cy="2.5" r=".8" fill="#3a3"/><circle cx="2.5" cy="6.5" r=".8" fill="#e22"/><circle cx="2.5" cy="10.5" r=".8" fill="#46c"/><g stroke="#3a4a6a" stroke-width="1.2"><path d="M6 2.5 L9 2.5 M10.5 2.5 L14 2.5 M6 6.5 L9 6.5 M10.5 6.5 L14 6.5 M6 10.5 L9 10.5 M10.5 10.5 L14 10.5"/></g></svg>
<div class="btri" style="left:1657px;top:219px;border-left-width:4px;border-right-width:4px;border-top-width:5px"></div>
<svg style="left:1679px;top:214px" width="15" height="14" viewBox="0 0 15 14"><rect x=".5" y=".5" width="14" height="13" fill="#f4f4f4" stroke="#6a82a8"/><rect x="1" y="1" width="8" height="2" fill="#d0dae8"/><rect x="9.5" y="1" width="4.5" height="12" fill="#80d0e8" stroke="#6a82a8" stroke-width=".6"/></svg>
<svg style="left:1705px;top:213px" width="16" height="16" viewBox="0 0 16 16"><circle cx="8" cy="8" r="7.5" fill="#a8a8a8"/><circle cx="8" cy="8" r="6.5" fill="#1838b0"/><path d="M5.5 6 C5.5 3 10.5 3 10.5 6 C10.5 8 8 8 8 10" stroke="#fff" stroke-width="1.8" fill="none"/><circle cx="8" cy="12.3" r="1.1" fill="#fff"/></svg>
<div class="a" style="left:988px;top:236px;width:239px;height:465px;background:#f8f8f8"></div>
<svg style="left:1027px;top:237px" width="14" height="16" viewBox="0 0 14 16"><ellipse cx="4.5" cy="12" rx="4" ry="3.2" fill="#2a8ad8"/><path d="M7.8 12 L7.8 1 C9 3 12 4 12 8" stroke="#2a8ad8" stroke-width="1.6" fill="none"/></svg>
<div class="nav" style="left:1045px;top:240px">Musique</div>
<svg style="left:1027px;top:255px" width="14" height="16" viewBox="0 0 14 16"><path d="M3.5 0.5 L10 0.5 L13.5 4 L13.5 14.5 L3.5 14.5Z" fill="#f4f8fc" stroke="#a8b8cc"/><rect x="0.5" y="6.5" width="9" height="8" fill="#b8d4f0" stroke="#7090b8"/><rect x="2" y="8" width="6" height="4" fill="#3a8ad8"/></svg>
<div class="nav" style="left:1045px;top:258px">Nouvelle bibliothèque</div>
<svg style="left:1027px;top:273px" width="14" height="16" viewBox="0 0 14 16"><rect x="0.5" y="0.5" width="13" height="15" fill="#283038"/><rect x="3" y="1.5" width="8" height="13" fill="#3aa0e0"/><path d="M3 5 L8 7 L11 4 L11 9 L5 11Z" fill="#d06030"/><g fill="#c8c8c8"><rect x="1" y="2" width="1" height="1.5"/><rect x="1" y="5.5" width="1" height="1.5"/><rect x="1" y="9" width="1" height="1.5"/><rect x="1" y="12.5" width="1" height="1.5"/><rect x="12" y="2" width="1" height="1.5"/><rect x="12" y="5.5" width="1" height="1.5"/><rect x="12" y="9" width="1" height="1.5"/><rect x="12" y="12.5" width="1" height="1.5"/></g></svg>
<div class="nav" style="left:1045px;top:276px">Vidéos</div>
<svg style="left:1017px;top:291px" width="14" height="16" viewBox="0 0 14 16"><path d="M1 1 L8 1 L8 15 L1 14Z" fill="#e8cc70"/><circle cx="8.5" cy="7" r="2.6" fill="#a06a40"/><path d="M4 15 C4 10 13 10 13 15Z" fill="#3aa078"/></svg>
<div class="nav" style="left:1035px;top:294px">David D’Hollanders</div>
<svg style="left:1017px;top:309px" width="16" height="16" viewBox="0 0 16 16"><rect x="3.5" y="1.5" width="12" height="10" fill="#e0e0e0" stroke="#606060"/><rect x="5" y="3" width="9" height="7" fill="#1020c8"/><rect x="0.5" y="6" width="2.5" height="9" fill="#d8d8d8" stroke="#707070" stroke-width=".6"/><rect x="6" y="12" width="7" height="2" fill="#a0a0a0"/></svg>
<div class="nav" style="left:1035px;top:312px">Ordinateur</div>
<svg style="left:1027px;top:327px" width="16" height="16" viewBox="0 0 16 16"><path d="M1 10 L4 7 L15 7 L15 13 L1 13Z" fill="#b8bcc0" stroke="#70757a" stroke-width=".8"/><rect x="1" y="11" width="14" height="2" fill="#5a6068"/><circle cx="13" cy="9.5" r=".9" fill="#4ac04a"/><g transform="translate(4,0)"><rect x="0" y="0" width="3.5" height="3.5" fill="#f05030"/><rect x="4" y="0" width="3.5" height="3.5" fill="#50b040"/><rect x="0" y="4" width="3.5" height="3" fill="#3080e0"/><rect x="4" y="4" width="3.5" height="3" fill="#f8c020"/></g></svg>
<div class="nav" style="left:1045px;top:330px">Disque local (C:)</div>
<svg style="left:1036px;top:344px" width="13" height="16" viewBox="0 0 13 16"><path d="M1 1.5 L7 1.5 L11 3 L11 14.5 L5 15.5 L1 13.5Z" fill="#e8c65a"/><path d="M1 1.5 L5 3 L5 15.5 L1 13.5Z" fill="#f6e4a0"/><path d="M2.2 2.5 L2.2 12.8" stroke="#fff7d8" stroke-width="1"/><path d="M11 6 L12.5 6.5 L12.5 12 L11 12.5Z" fill="#d8b040"/><rect x="10.5" y="10" width="1.3" height="2" fill="#3aa0e0"/></svg>
<div class="nav" style="left:1054px;top:348px">ADLER</div>
<svg style="left:1046px;top:362px" width="13" height="16" viewBox="0 0 13 16"><path d="M1 1.5 L7 1.5 L11 3 L11 14.5 L5 15.5 L1 13.5Z" fill="#e8c65a"/><path d="M1 1.5 L5 3 L5 15.5 L1 13.5Z" fill="#f6e4a0"/><path d="M2.2 2.5 L2.2 12.8" stroke="#fff7d8" stroke-width="1"/><path d="M11 6 L12.5 6.5 L12.5 12 L11 12.5Z" fill="#d8b040"/><rect x="10.5" y="10" width="1.3" height="2" fill="#3aa0e0"/></svg>
<div class="nav" style="left:1063px;top:366px">CentralmanagerSQL</div>
<svg style="left:1046px;top:380px" width="13" height="16" viewBox="0 0 13 16"><path d="M1 1.5 L7 1.5 L11 3 L11 14.5 L5 15.5 L1 13.5Z" fill="#e8c65a"/><path d="M1 1.5 L5 3 L5 15.5 L1 13.5Z" fill="#f6e4a0"/><path d="M2.2 2.5 L2.2 12.8" stroke="#fff7d8" stroke-width="1"/><path d="M11 6 L12.5 6.5 L12.5 12 L11 12.5Z" fill="#d8b040"/><rect x="10.5" y="10" width="1.3" height="2" fill="#3aa0e0"/></svg>
<div class="nav" style="left:1063px;top:384px">Fichier Client Synchro</div>
<svg style="left:1046px;top:398px" width="13" height="16" viewBox="0 0 13 16"><path d="M1 1.5 L7 1.5 L11 3 L11 14.5 L5 15.5 L1 13.5Z" fill="#e8c65a"/><path d="M1 1.5 L5 3 L5 15.5 L1 13.5Z" fill="#f6e4a0"/><path d="M2.2 2.5 L2.2 12.8" stroke="#fff7d8" stroke-width="1"/><path d="M11 6 L12.5 6.5 L12.5 12 L11 12.5Z" fill="#d8b040"/><rect x="10.5" y="10" width="1.3" height="2" fill="#3aa0e0"/></svg>
<div class="nav" style="left:1063px;top:402px">maj</div>
<svg style="left:1046px;top:416px" width="13" height="16" viewBox="0 0 13 16"><path d="M1 1.5 L7 1.5 L11 3 L11 14.5 L5 15.5 L1 13.5Z" fill="#e8c65a"/><path d="M1 1.5 L5 3 L5 15.5 L1 13.5Z" fill="#f6e4a0"/><path d="M2.2 2.5 L2.2 12.8" stroke="#fff7d8" stroke-width="1"/><path d="M11 6 L12.5 6.5 L12.5 12 L11 12.5Z" fill="#d8b040"/><rect x="10.5" y="10" width="1.3" height="2" fill="#3aa0e0"/></svg>
<div class="nav" style="left:1063px;top:420px">runtime</div>
<svg style="left:1046px;top:434px" width="13" height="16" viewBox="0 0 13 16"><path d="M1 1.5 L7 1.5 L11 3 L11 14.5 L5 15.5 L1 13.5Z" fill="#e8c65a"/><path d="M1 1.5 L5 3 L5 15.5 L1 13.5Z" fill="#f6e4a0"/><path d="M2.2 2.5 L2.2 12.8" stroke="#fff7d8" stroke-width="1"/><path d="M11 6 L12.5 6.5 L12.5 12 L11 12.5Z" fill="#d8b040"/><rect x="10.5" y="10" width="1.3" height="2" fill="#3aa0e0"/></svg>
<div class="nav" style="left:1063px;top:438px">save</div>
<svg style="left:1046px;top:452px" width="13" height="16" viewBox="0 0 13 16"><path d="M1 1.5 L7 1.5 L11 3 L11 14.5 L5 15.5 L1 13.5Z" fill="#e8c65a"/><path d="M1 1.5 L5 3 L5 15.5 L1 13.5Z" fill="#f6e4a0"/><path d="M2.2 2.5 L2.2 12.8" stroke="#fff7d8" stroke-width="1"/><path d="M11 6 L12.5 6.5 L12.5 12 L11 12.5Z" fill="#d8b040"/><rect x="10.5" y="10" width="1.3" height="2" fill="#3aa0e0"/></svg>
<div class="nav" style="left:1063px;top:456px">SCRIPT</div>
<div class="a" style="left:989px;top:595px;width:238px;height:17px;background:#d0d0c8"></div>
<svg style="left:1055px;top:595px" width="13" height="16" viewBox="0 0 13 16"><path d="M1 1.5 L7 1.5 L11 3 L11 14.5 L5 15.5 L1 13.5Z" fill="#e8c65a"/><path d="M1 1.5 L5 3 L5 15.5 L1 13.5Z" fill="#f6e4a0"/><path d="M2.2 2.5 L2.2 12.8" stroke="#fff7d8" stroke-width="1"/><path d="M11 6 L12.5 6.5 L12.5 12 L11 12.5Z" fill="#d8b040"/><rect x="10.5" y="10" width="1.3" height="2" fill="#3aa0e0"/></svg>
<div class="nav" style="left:1073px;top:599px">Rep_Envoi</div>
<svg style="left:1055px;top:613px" width="13" height="16" viewBox="0 0 13 16"><path d="M1 1.5 L7 1.5 L11 3 L11 14.5 L5 15.5 L1 13.5Z" fill="#e8c65a"/><path d="M1 1.5 L5 3 L5 15.5 L1 13.5Z" fill="#f6e4a0"/><path d="M2.2 2.5 L2.2 12.8" stroke="#fff7d8" stroke-width="1"/><path d="M11 6 L12.5 6.5 L12.5 12 L11 12.5Z" fill="#d8b040"/><rect x="10.5" y="10" width="1.3" height="2" fill="#3aa0e0"/></svg>
<div class="nav" style="left:1073px;top:617px">Rep_Info</div>
<svg style="left:1055px;top:631px" width="13" height="16" viewBox="0 0 13 16"><path d="M1 1.5 L7 1.5 L11 3 L11 14.5 L5 15.5 L1 13.5Z" fill="#e8c65a"/><path d="M1 1.5 L5 3 L5 15.5 L1 13.5Z" fill="#f6e4a0"/><path d="M2.2 2.5 L2.2 12.8" stroke="#fff7d8" stroke-width="1"/><path d="M11 6 L12.5 6.5 L12.5 12 L11 12.5Z" fill="#d8b040"/><rect x="10.5" y="10" width="1.3" height="2" fill="#3aa0e0"/></svg>
<div class="nav" style="left:1073px;top:635px">Rep_Info_Connexion</div>
<svg style="left:1055px;top:649px" width="13" height="16" viewBox="0 0 13 16"><path d="M1 1.5 L7 1.5 L11 3 L11 14.5 L5 15.5 L1 13.5Z" fill="#e8c65a"/><path d="M1 1.5 L5 3 L5 15.5 L1 13.5Z" fill="#f6e4a0"/><path d="M2.2 2.5 L2.2 12.8" stroke="#fff7d8" stroke-width="1"/><path d="M11 6 L12.5 6.5 L12.5 12 L11 12.5Z" fill="#d8b040"/><rect x="10.5" y="10" width="1.3" height="2" fill="#3aa0e0"/></svg>
<div class="nav" style="left:1073px;top:653px">Rep_Reception</div>
<svg style="left:1055px;top:667px" width="13" height="16" viewBox="0 0 13 16"><path d="M1 1.5 L7 1.5 L11 3 L11 14.5 L5 15.5 L1 13.5Z" fill="#e8c65a"/><path d="M1 1.5 L5 3 L5 15.5 L1 13.5Z" fill="#f6e4a0"/><path d="M2.2 2.5 L2.2 12.8" stroke="#fff7d8" stroke-width="1"/><path d="M11 6 L12.5 6.5 L12.5 12 L11 12.5Z" fill="#d8b040"/><rect x="10.5" y="10" width="1.3" height="2" fill="#3aa0e0"/></svg>
<div class="nav" style="left:1073px;top:671px">Rep_Temp</div>
<svg style="left:1055px;top:685px" width="13" height="16" viewBox="0 0 13 16"><path d="M1 1.5 L7 1.5 L11 3 L11 14.5 L5 15.5 L1 13.5Z" fill="#e8c65a"/><path d="M1 1.5 L5 3 L5 15.5 L1 13.5Z" fill="#f6e4a0"/><path d="M2.2 2.5 L2.2 12.8" stroke="#fff7d8" stroke-width="1"/><path d="M11 6 L12.5 6.5 L12.5 12 L11 12.5Z" fill="#d8b040"/><rect x="10.5" y="10" width="1.3" height="2" fill="#3aa0e0"/></svg>
<div class="nav" style="left:1073px;top:689px">Rep_Travail</div>
<div class="a" style="left:1227px;top:236px;width:16px;height:465px;background-color:#ebe9e4;background-image:repeating-conic-gradient(#f4f3f0 0 25%,#d0d0c8 0 50%);background-size:2px 2px"></div>
<div class="tb" style="left:1227px;top:236px;width:16px;height:15px"></div>
<div class="a" style="left:1231px;top:242px;width:0;height:0;border-left:4px solid transparent;border-right:4px solid transparent;border-bottom:4px solid #000"></div>
<div class="tb" style="left:1227px;top:287px;width:16px;height:97px"></div>
<div class="tb" style="left:1227px;top:686px;width:16px;height:15px"></div>
<div class="btri" style="left:1231px;top:691px"></div>
<div class="a" style="left:1243px;top:236px;width:2px;height:465px;background:#d0d0c8"></div>
<div class="a" style="left:1245px;top:236px;width:489px;height:465px;background:#f8f8f8"></div>
<div class="a" style="left:1245px;top:237px;width:490px;height:20px;background:#d0d0c8;border-top:1px solid #fff;border-bottom:2px solid #606060"></div>
<div class="a" style="left:1501px;top:238px;width:2px;height:18px;border-left:1px solid #404040;border-right:1px solid #fff"></div>
<div class="a" style="left:1614px;top:238px;width:2px;height:18px;border-left:1px solid #404040;border-right:1px solid #fff"></div>
<div class="a" style="left:1727px;top:238px;width:2px;height:18px;border-left:1px solid #404040;border-right:1px solid #fff"></div>
<div class="nav" style="left:1259px;top:243px">Nom</div>
<div class="nav" style="left:1506px;top:243px">Modifié le</div>
<svg style="left:1552px;top:246px" width="6" height="4" viewBox="0 0 6 4"><path d="M0 0 L6 0 L3 3Z" fill="#a0a0a0"/></svg>
<div class="nav" style="left:1619px;top:243px">Type</div>
<div class="a" style="left:1730px;top:244px;width:2px;height:2px;background:#606060"></div>
<svg style="left:1264px;top:265px" width="14" height="16" viewBox="0 0 14 16"><path d="M1.5 0.5 L9 0.5 L12.5 4 L12.5 15.5 L1.5 15.5Z" fill="#f8f8f8" stroke="#a0a0a0"/><path d="M9 0.5 L9 4 L12.5 4" fill="none" stroke="#b0b0b0"/></svg>
<div class="nav" style="left:1280px;top:269px">999_0350CHAN.dat</div>
<div class="nav" style="left:1506px;top:269px">1/10/2018 17:44</div>
<div class="nav" style="left:1619px;top:269px">Fichier DAT</div>
<div class="a" style="left:1245px;top:685px;width:490px;height:16px;background-color:#ebe9e4;background-image:repeating-conic-gradient(#f4f3f0 0 25%,#d0d0c8 0 50%);background-size:2px 2px"></div>
<div class="tb" style="left:1246px;top:686px;width:14px;height:15px"></div>
<div class="a" style="left:1250px;top:689px;width:0;height:0;border-top:4px solid transparent;border-bottom:4px solid transparent;border-right:4px solid #000"></div>
<div class="tb" style="left:1260px;top:686px;width:397px;height:15px"></div>
<div class="tb" style="left:1720px;top:686px;width:15px;height:15px"></div>
<div class="a" style="left:1726px;top:689px;width:0;height:0;border-top:4px solid transparent;border-bottom:4px solid transparent;border-left:4px solid #000"></div>
<div class="a" style="left:988px;top:701px;width:746px;height:4px;background:#d0d0c8"></div>
<div class="a" style="left:988px;top:705px;width:746px;height:46px;background:#f8f8f8"></div>
<svg style="left:1006px;top:705px" width="30" height="42" viewBox="0 0 30 42"><path d="M3 3 L24 5 L24 34 L12 38 L3 33Z" fill="#e6cf78"/><path d="M3 3 L12 7 L12 40 L3 33Z" fill="#f0dc90"/><path d="M4.5 5 L10.5 8 L10.5 36" stroke="#faf0c0" stroke-width="1.2" fill="none"/><path d="M24 18 L27 19 L27 31 L24 33Z" fill="#d8b850"/><rect x="25" y="30" width="1.5" height="2" fill="#3a90e0"/></svg>
<div class="nav" style="left:1062px;top:711px;font-size:11.5px;letter-spacing:-0.2px">1 élément</div>
<div class="nav" style="left:1120px;top:711px;font-size:11.5px;letter-spacing:-0.2px">État :</div>
<svg style="left:1150px;top:706px" width="15" height="14" viewBox="0 0 15 14"><circle cx="5" cy="3.5" r="2.6" fill="#6a4a30"/><path d="M0.5 13 C0.5 7 9.5 7 9.5 13Z" fill="#3aa878"/><circle cx="10" cy="3" r="2.6" fill="#6a4a30"/><path d="M6 12 C6 6 14.5 6 14.5 12Z" fill="#3a90d8"/></svg>
<div class="nav" style="left:1169px;top:711px;font-size:11.5px;letter-spacing:-0.2px">Partagé</div>

<!-- ===== DIALOG ===== -->
<div class="a win" style="left:745px;top:462px;width:389px;height:136px"></div>
<div class="a" style="left:747px;top:465px;width:384px;height:17px;background:#0a246a"></div>
<div class="t" style="left:748px;top:469px;font-weight:bold;letter-spacing:0.2px;color:#fff">Erreur</div>
<div class="tb" style="left:1114px;top:467px;width:16px;height:13px"></div>
<svg style="left:1118px;top:469px" width="8" height="8" viewBox="0 0 8 8"><path d="M0.5 0.5 L7.5 7.5 M7.5 0.5 L0.5 7.5" stroke="#000" stroke-width="1.6"/></svg>
<div class="a" style="left:748px;top:482px;width:383px;height:74px;background:#f8f8f8"></div>
<svg style="left:766px;top:503px" width="33" height="33" viewBox="0 0 33 33">
<defs><radialGradient id="ge" cx=".35" cy=".3" r=".8"><stop offset="0" stop-color="#f06060"/><stop offset=".5" stop-color="#c81818"/><stop offset="1" stop-color="#900808"/></radialGradient></defs>
<circle cx="16.5" cy="16.5" r="15.5" fill="#d8d8d8" stroke="#a0a0a0" stroke-width="1"/>
<circle cx="16.5" cy="16.5" r="13.5" fill="url(#ge)"/>
<path d="M10 10 L23 23 M23 10 L10 23" stroke="#e8e8e8" stroke-width="3.8" stroke-linecap="square"/>
</svg>
<div class="nav" style="left:805px;top:515px;letter-spacing:-0.22px">L'opérateur '*' n'est pas défini pour type 'DBNull' et type 'Integer'.</div>
<div class="a" style="left:1049px;top:566px;width:76px;height:22px;border:1px solid #000;background:#d0d0c8;box-shadow:inset 1px 1px 0 #fff,inset -1px -1px 0 #404040,inset -2px -2px 0 #808080"></div>
<div class="nav" style="left:1079px;top:572px;letter-spacing:0">OK</div>


<!-- ===== TEAMVIEWER TOOLBAR ===== -->
<div class="a" style="left:646px;top:22px;width:582px;height:35px;background:#f0f0f0;border-left:1px solid #fff;border-top:1px solid #fff"></div>
<div class="a" style="left:1164px;top:57px;width:51px;height:19px;background:#f0f0f0"></div>
<!-- close X -->
<svg style="left:654px;top:30px" width="20" height="19" viewBox="0 0 20 19"><path d="M2 2 L17.5 17 M17.5 2 L2 17" stroke="#555" stroke-width="2.6" stroke-linecap="square"/></svg>
<!-- lightning -->
<svg style="left:692px;top:29px" width="17" height="21" viewBox="0 0 17 21"><path d="M7.5 0.5 L15.5 0.5 L11.5 7 L15.5 7 L3.5 20.5 L7 11.5 L0.5 11.5 Z" fill="#efc46c"/></svg>
<div class="tvt" style="left:717px;top:33px;font-size:12.2px">Actions</div>
<div class="tri" style="left:762px;top:37px"></div>
<!-- visualiser icon -->
<svg style="left:781px;top:28px" width="22" height="22" viewBox="0 0 22 22">
<rect x="1.5" y="1.5" width="13" height="9" rx="1" fill="#fff" stroke="#3f7fc0" stroke-width="2"/>
<path d="M4 12 L12 12" stroke="#3f7fc0" stroke-width="1.5"/>
<path d="M21 5 L15 11 L17 13 L21 9 Z" fill="#555"/>
<path d="M3 21 C7 20.5 10 20 13.5 20.5 C17.5 20 18 13.5 14 13.2 C11 13 9.5 16 8 18 C6.5 19.5 5 20.5 3 21Z" fill="#3f7fc0"/><path d="M4.5 15 L8.5 13.5 M3.5 17.5 L7 16.5" stroke="#3f7fc0" stroke-width="1.2"/>
</svg>
<div class="tvt" style="left:809px;top:33px;font-size:11.5px">Visualiser</div>
<div class="tri" style="left:863px;top:37px"></div>
<!-- communication icon -->
<svg style="left:881px;top:28px" width="24" height="22" viewBox="0 0 24 22">
<path d="M3 3 C0 5 1 11 5 16 C9 20 14 22 16 20 L17 18 L13.5 15.5 L12 17 C10 17 7 13 6 10 L8 8.5 L5.5 4.5 Z" fill="#3f7fc0"/>
<path d="M12 2 L22 2 L22 8 L17 8 L15 10 L15 8 L12 8 Z" fill="#fff" stroke="#666" stroke-width="1"/>
<path d="M9 5 L14 5 L14 11 L12 11 L10 13 L10 11 L9 11 Z" fill="#fff" stroke="#666" stroke-width="1"/>
</svg>
<div class="tvt" style="left:910px;top:33px;font-size:12.4px">Communication</div>
<div class="tri" style="left:1003px;top:37px"></div>
<!-- files icon -->
<svg style="left:1020px;top:28px" width="26" height="22" viewBox="0 0 26 22">
<path d="M1.5 1.5 L10 1.5 L13.5 5 L13.5 18.5 L1.5 18.5 Z" fill="#fff" stroke="#555" stroke-width="1"/>
<path d="M10 1.5 L10 5 L13.5 5" fill="none" stroke="#555" stroke-width="1"/>
<path d="M10 11 L13 11 C13 8 17 8 17 11 L19 11 L19 14 C22 14 22 18 19 18 L19 21 L16 21 C16 19 13 19 13 21 L10 21 Z" fill="#6fa08c"/>
</svg>
<div class="tvt" style="left:1049px;top:33px;font-size:11.8px">Fichiers &amp; Suppléments</div>
<div class="tri" style="left:1179px;top:37px"></div>
<!-- smiley -->
<svg style="left:1200px;top:29px" width="19" height="19" viewBox="0 0 19 19">
<circle cx="9.5" cy="9.5" r="8.8" fill="#f3d21a"/>
<ellipse cx="6.5" cy="6.5" rx="1.2" ry="2" fill="#4a3410"/><ellipse cx="12.5" cy="6.5" rx="1.2" ry="2" fill="#4a3410"/>
<path d="M3.5 10 C5 16 14 16 15.5 10 Z" fill="#6b3a12"/><path d="M4.5 10.5 L14.5 10.5 L14 12 L5 12 Z" fill="#fff"/>
</svg>
<!-- small panel icons -->
<div class="a" style="left:1164px;top:57px;width:14px;height:19px;background:#d6d6d6"></div>
<svg style="left:1165px;top:59px" width="12" height="16" viewBox="0 0 12 16">
<g fill="#fff"><rect x="1" y="1" width="2" height="2"/><rect x="5" y="1" width="2" height="2"/><rect x="9" y="1" width="2" height="2"/>
<rect x="1" y="5" width="2" height="2"/><rect x="5" y="5" width="2" height="2"/><rect x="9" y="5" width="2" height="2"/>
<rect x="1" y="9" width="2" height="2"/><rect x="5" y="9" width="2" height="2"/><rect x="9" y="9" width="2" height="2"/>
<rect x="1" y="13" width="2" height="2"/><rect x="5" y="13" width="2" height="2"/><rect x="9" y="13" width="2" height="2"/></g></svg>
<svg style="left:1182px;top:61px" width="10" height="10" viewBox="0 0 10 10"><path d="M0.5 3 L0.5 0.5 L3 0.5 M0.5 0.5 L3.5 3.5 M7 0.5 L9.5 0.5 L9.5 3 M9.5 0.5 L6.5 3.5 M0.5 7 L0.5 9.5 L3 9.5 M0.5 9.5 L3.5 6.5 M9.5 7 L9.5 9.5 L7 9.5 M9.5 9.5 L6.5 6.5" stroke="#777" stroke-width="1" fill="none"/></svg>
<svg style="left:1198px;top:61px" width="14" height="9" viewBox="0 0 14 9"><path d="M1 8 L7 2 L13 8" stroke="#707070" stroke-width="2.2" fill="none"/></svg>

<!-- ===== TASKBAR ===== -->
<div class="a" style="left:32px;top:999px;width:1807px;height:38px;background:#d0d0c8;border-top:1px solid #d0d0c8"></div>
<div class="a" style="left:32px;top:1000px;width:1807px;height:1px;background:#fff"></div>
<div class="tb" style="left:34px;top:1003px;width:73px;height:36px"></div>
<svg style="left:36px;top:1012px" width="16" height="16" viewBox="0 0 16 16"><path d="M3 1.5 C5 0.5 6.5 1 8 2 L7 7.5 C5.5 6.5 4 6.3 2 7Z" fill="#f05a22"/><path d="M8.8 2.3 C10.5 3.3 12.5 3.3 15 2.5 L14 8 C11.8 8.8 10 8.6 7.8 7.8Z" fill="#58b030"/><path d="M1.8 7.8 C4 7.1 5.5 7.3 7 8.3 L6 14 C4.5 13 2.8 12.8 0.5 13.5Z" fill="#2a8ae8"/><path d="M7.7 8.6 C10 9.4 11.8 9.6 13.9 8.8 L13 14.3 C10.5 15.2 8.7 15 6.8 14.2Z" fill="#fcc010"/></svg>
<div class="t" style="left:52px;top:1016px;font-weight:bold;font-size:11.5px;letter-spacing:-0.05px">Démarrer</div>
<div class="a" style="left:114px;top:1005px;width:3px;height:32px;border-left:1px solid #808080;border-right:1px solid #fff"></div>
<div class="tb" style="left:124px;top:1003px;width:46px;height:36px"></div>
<div class="tb" style="left:360px;top:1003px;width:41px;height:36px"></div>
<div class="a" style="left:401px;top:1005px;width:4px;height:32px;border-left:1px solid #808080;border-right:1px solid #fff;background:#d0d0c8"></div>
<div class="tb" style="left:406px;top:1003px;width:46px;height:36px"></div>
<div class="tb" style="left:454px;top:1003px;width:45px;height:36px"></div>
<div class="tb" style="left:500px;top:1003px;width:46px;height:36px"></div>
<div class="tb" style="left:547px;top:1003px;width:46px;height:36px"></div>
<div class="tb" style="left:595px;top:1003px;width:46px;height:36px"></div>
<div class="a" style="left:642px;top:1003px;width:45px;height:36px;border-top:1px solid #404040;border-left:1px solid #404040;border-right:1px solid #fff;background:#f6f6f4;box-shadow:inset 1px 1px 0 #808080"></div>
<svg style="left:132px;top:1008px" width="30" height="29" viewBox="0 0 30 29"><path d="M2 5 L12 5 L14 3 L28 3 L28 26 L2 26Z" fill="#f0d888" stroke="#c8a850" stroke-width="1"/><rect x="4" y="2" width="9" height="4" fill="#fff" stroke="#bba" stroke-width=".5"/><rect x="5" y="3" width="2" height="1.5" fill="#20b020"/><rect x="12" y="4" width="8" height="4" fill="#fff"/><rect x="13" y="5" width="2" height="1.5" fill="#e02020"/><rect x="18" y="6" width="8" height="3" fill="#fff"/><rect x="19" y="6.5" width="2" height="1.5" fill="#2080e0"/><path d="M2 9 L28 9 L28 26 L2 26Z" fill="#f6e6a8"/><path d="M6 16 L24 16 L24 28 L19 28 L19 23 L11 23 L11 28 L6 28Z" fill="#7ac4ec" stroke="#4a94c8" stroke-width="1"/></svg>
<svg style="left:180px;top:1006px" width="29" height="29" viewBox="0 0 29 29"><defs><linearGradient id="fxa" x1="0" y1="1" x2="1" y2="0"><stop offset="0" stop-color="#e0104a"/><stop offset=".35" stop-color="#ff3a1a"/><stop offset=".65" stop-color="#ff9a10"/><stop offset="1" stop-color="#fff040"/></linearGradient></defs><circle cx="14.2" cy="15" r="13.8" fill="url(#fxa)"/><ellipse cx="14.5" cy="12.5" rx="7" ry="9.5" fill="#1a60f0"/><path d="M21 1.5 C27 5 29 12 28 17 C27 24 21 28 15 28.5 C20 26 23 21 22.3 15 C21.8 10 19 7 21 1.5Z" fill="#ffd420"/><path d="M6.5 5 L9 8 C11 7 13.5 7 15.5 8.2 C14 10 12.5 11 13.5 13 C11.5 14 10.5 16 12.5 18.5 C14.5 20.5 18 20.5 20.5 19.5 C17.5 22.5 12 23.5 8.5 20.5 C5.5 17 4.5 11 6.5 5Z" fill="#ff6818"/><path d="M12 18.5 C14 20 17 20 19 18.5 C18 21 15 21.5 12 18.5Z" fill="#ffb020"/></svg>
<svg style="left:227px;top:1007px" width="28" height="28" viewBox="0 0 28 28"><circle cx="14" cy="14" r="13.5" fill="#20a050"/><path d="M14 0.5 A13.5 13.5 0 0 1 25.7 7.25 L14 7.25 A6.75 6.75 0 0 0 8.2 10.6 L2.3 7.2 A13.5 13.5 0 0 1 14 0.5Z" fill="#e04a3a"/><path d="M25.7 7.25 A13.5 13.5 0 0 1 13 27.5 L19.8 17.4 A6.75 6.75 0 0 0 20 10Z" fill="#fcc83a"/><circle cx="14" cy="14" r="6.5" fill="#fff"/><circle cx="14" cy="14" r="5" fill="#4a8af0"/></svg>
<svg style="left:273px;top:1006px" width="31" height="30" viewBox="0 0 31 30"><rect x="0" y="0" width="30.5" height="30" fill="#f8f8f8"/><path d="M12.5 4.5 C8 6 8.5 12 11 16 C14 21 19 25 22 24 C23.5 23 23.5 21.5 22.5 20.5" stroke="#d01010" stroke-width="2.8" fill="none" stroke-linecap="round"/><path d="M2 20.5 L11 14" stroke="#d01010" stroke-width="1.3"/><path d="M11 13.5 C15 10 20 9 24 9.3 C27 9 29 9 29.5 9 C28 11 26.5 12.5 24.5 13.5" stroke="#d01010" stroke-width="2.2" fill="none"/><path d="M13.5 8.5 C16.5 6.5 20.5 6.5 23.5 9 C25 12 25 17 21.5 20.5" stroke="#d01010" stroke-width="1.8" fill="none"/></svg>
<svg style="left:319px;top:1005px" width="32" height="32" viewBox="0 0 32 32"><rect x="2" y="1" width="30" height="30" fill="#f80000"/><path d="M9 3.5 L25 3.5 L29.5 8 L29.5 24 L25 28.5 L9 28.5 L4.5 24 L4.5 8Z" fill="none" stroke="#cfd4d4" stroke-width="2.6"/><path d="M8.5 5 L22.5 5 L25.5 8 L25.5 14.5 L23.5 16.2 L27.5 18.5 L27.5 24.5 L24.5 27.5 L20.5 27.5 L20.5 30.5 L8.5 30.5 Z" fill="#ffff00" stroke="#a00000" stroke-width="1.3"/><rect x="14" y="9" width="6.2" height="5.3" fill="#e80000" stroke="#900000" stroke-width=".6"/><rect x="15.5" y="10.8" width="3" height="1.2" fill="#c8f0f0"/><path d="M17 16.5 L23.5 16.5" stroke="#a00000" stroke-width="1.4"/><rect x="17" y="18.5" width="4.6" height="3.2" fill="#e80000"/><rect x="17.5" y="19.5" width="3" height="1" fill="#c8f0f0"/></svg>
<svg style="left:366px;top:1006px" width="30" height="30" viewBox="0 0 30 30"><path d="M5 0.5 L26 0.5 L26 28 L0.5 28 L0.5 6 C0.5 3 2.5 1 5 0.5Z" fill="#f4a418"/><path d="M5.5 2.5 L24 2.5 L24 26 L2.5 26 L2.5 7 C2.5 4.5 3.5 3 5.5 2.5Z" fill="#fff8e8"/><path d="M14 3 L24 3 L24 18 L14 18Z" fill="#fcd050"/><ellipse cx="9.5" cy="12.5" rx="5.2" ry="7" fill="none" stroke="#e8720c" stroke-width="3.6"/><circle cx="22.5" cy="13" r="4.3" fill="#fffbe8" stroke="#f0b030" stroke-width=".8"/><path d="M21 12 L22.5 14 L25 12.5" stroke="#e05020" stroke-width="1" fill="none"/><rect x="15.5" y="18.5" width="13.5" height="11" fill="#fff0a8" stroke="#b89030" stroke-width="1"/><path d="M15.5 18.5 L22.2 25 L29 18.5 M15.5 29.5 L20 24.5 M29 29.5 L24.5 24.5" fill="none" stroke="#c0a040" stroke-width=".9"/></svg>
<svg style="left:415px;top:1006px" width="30" height="30" viewBox="0 0 30 30"><rect x="0" y="0" width="30" height="30" fill="#0050d8"/><rect x="2" y="2" width="26" height="26" fill="#f87a3a"/><path d="M4.3 3.1 L18.8 3.1 L18.8 7.5 L26 7.5 L26 19.6 L16 19.6 L16 26.8 L12 26.8 L12 15.2 L8 15.2 L8 23.6 L4.3 23.6Z" fill="#0a5ad8"/><rect x="8" y="5.9" width="4" height="4.3" fill="#f87a3a"/><rect x="12" y="5.9" width="2.7" height="1.5" fill="#f87a3a"/><rect x="16" y="10.8" width="6" height="5.1" fill="#f87a3a"/><path d="M21 22.5 L22.5 22.5 L22.5 26.5 M24 23 L27 22.5 L24.5 26.5 L27 26.5" stroke="#2a60c0" stroke-width="1.2" fill="none"/></svg>
<svg style="left:461px;top:1006px" width="32" height="32" viewBox="0 0 32 32"><path d="M1.3 7.5 L4.9 3.2 L30.8 3.2 L27.2 7.5Z" fill="#c4c4c4" stroke="#000" stroke-width="1"/><g fill="#202020"><circle cx="9" cy="5.6" r=".9"/><circle cx="12" cy="5.6" r=".9"/><circle cx="15" cy="5.6" r=".9"/><circle cx="18" cy="5.6" r=".9"/><circle cx="21" cy="5.6" r=".9"/><circle cx="24" cy="5.6" r=".9"/></g><path d="M27.2 7.5 L30.8 3.2 L30.8 25.5 L27.2 29.5Z" fill="#a8a8a8" stroke="#000" stroke-width="1"/><rect x="1.3" y="7.5" width="25.9" height="22" fill="#d0d0d0" stroke="#000" stroke-width="1.2"/><rect x="2.5" y="8.6" width="24" height="6" fill="#000"/><path d="M13.4 8 L13.4 29 M20.4 8 L20.4 29" stroke="#000" stroke-width="1.2"/><path d="M2.8 15 L2.8 29 M14.6 15 L14.6 29 M21.6 15 L21.6 29" stroke="#fff" stroke-width="1"/><rect x="10.2" y="10" width="2" height="1.6" fill="#20d0d0"/><rect x="15" y="9" width="4.5" height="1.4" fill="#a020a0"/><rect x="22" y="9" width="4" height="1.4" fill="#a020a0"/><circle cx="16.8" cy="18" r="1.8" fill="#f0f0f0" stroke="#000" stroke-width="1"/><rect x="3" y="24" width="10" height="1.5" fill="#e8e8e8"/><ellipse cx="9.6" cy="2" rx="1.9" ry="1.7" fill="#e8e040" stroke="#303060" stroke-width=".6"/><ellipse cx="23.9" cy="2" rx="1.9" ry="1.7" fill="#e8e040" stroke="#303060" stroke-width=".6"/></svg>
<svg style="left:556px;top:1006px" width="32" height="32" viewBox="0 0 32 32"><path d="M1.3 7.5 L4.9 3.2 L30.8 3.2 L27.2 7.5Z" fill="#c4c4c4" stroke="#000" stroke-width="1"/><g fill="#202020"><circle cx="9" cy="5.6" r=".9"/><circle cx="12" cy="5.6" r=".9"/><circle cx="15" cy="5.6" r=".9"/><circle cx="18" cy="5.6" r=".9"/><circle cx="21" cy="5.6" r=".9"/><circle cx="24" cy="5.6" r=".9"/></g><path d="M27.2 7.5 L30.8 3.2 L30.8 25.5 L27.2 29.5Z" fill="#a8a8a8" stroke="#000" stroke-width="1"/><rect x="1.3" y="7.5" width="25.9" height="22" fill="#d0d0d0" stroke="#000" stroke-width="1.2"/><rect x="2.5" y="8.6" width="24" height="6" fill="#000"/><path d="M13.4 8 L13.4 29 M20.4 8 L20.4 29" stroke="#000" stroke-width="1.2"/><path d="M2.8 15 L2.8 29 M14.6 15 L14.6 29 M21.6 15 L21.6 29" stroke="#fff" stroke-width="1"/><rect x="10.2" y="10" width="2" height="1.6" fill="#20d0d0"/><rect x="15" y="9" width="4.5" height="1.4" fill="#a020a0"/><rect x="22" y="9" width="4" height="1.4" fill="#a020a0"/><circle cx="16.8" cy="18" r="1.8" fill="#f0f0f0" stroke="#000" stroke-width="1"/><rect x="3" y="24" width="10" height="1.5" fill="#e8e8e8"/><ellipse cx="9.6" cy="2" rx="1.9" ry="1.7" fill="#e8e040" stroke="#303060" stroke-width=".6"/><ellipse cx="23.9" cy="2" rx="1.9" ry="1.7" fill="#e8e040" stroke="#303060" stroke-width=".6"/></svg>
<svg style="left:509px;top:1008px" width="31" height="28" viewBox="0 0 31 28"><path d="M0.8 16.5 L1.5 11 L4.2 7.5 L10.8 7.5 L10.8 18.5 L0.8 18.5Z" fill="#e0e0e0" stroke="#000" stroke-width="1.2"/><path d="M2.5 10.5 L4.5 8.5 M2 14 L4 11" stroke="#000" stroke-width="1"/><rect x="6" y="9" width="3" height="8" fill="#f4f4f4" stroke="#606060" stroke-width=".6"/><path d="M13.7 7 L13.7 19" stroke="#000" stroke-width="1.2"/><path d="M13.7 12 L20.6 5.8 L28.8 5.8 L29.8 9 L22.9 17.3 L13.7 17.3Z" fill="#c8c8c8" stroke="#000" stroke-width="1.2"/><path d="M19 8 L28 8" stroke="#f4f4f4" stroke-width="1.5"/><path d="M14.3 12.5 L26.5 12.5 L22.6 16.7 L14.3 16.7Z" fill="#00f0f0"/><path d="M0.8 18.5 L29.8 18.5 L29.8 22 L0.8 22Z" fill="#d8d8d8" stroke="#000" stroke-width="1"/><circle cx="7.1" cy="23.5" r="2.8" fill="#fff" stroke="#000" stroke-width="1.8"/><circle cx="18.6" cy="23.5" r="2.8" fill="#fff" stroke="#000" stroke-width="1.8"/><circle cx="25.8" cy="23.5" r="2.8" fill="#fff" stroke="#000" stroke-width="1.8"/><rect x="1" y="19.5" width="2" height="2" fill="#f0f000"/><rect x="28.2" y="19" width="1.8" height="2" fill="#f00000"/></svg>
<svg style="left:604px;top:1006px" width="27" height="30" viewBox="0 0 27 30"><path d="M2 1 L21 3 L23 5 L23 27 L21 29 L3 26 L1 24 L1 3Z" fill="#0a64e0"/><path d="M21 3 L23 5 L23 27 L21 29Z" fill="#0a4ab8"/><ellipse cx="12" cy="15" rx="8" ry="9" fill="#f0f4f8"/><path d="M4.5 15 L9 11 L9 13.3 L15 13.3 L15 11 L19.5 15 L15 19 L15 16.7 L9 16.7 L9 19Z" fill="#1a80e8"/></svg>
<svg style="left:648px;top:1006px" width="32" height="30" viewBox="0 0 32 30"><rect x="1" y="0.5" width="16" height="12" fill="#d8d8d8" stroke="#909090" stroke-width=".8"/><rect x="2.5" y="2" width="12" height="9" fill="#008080"/><path d="M2.5 2 L7 2 L5.5 5 L7 8 L5.5 11 L2.5 11Z" fill="#0000f0"/><rect x="16.5" y="1.5" width="1.5" height="11" fill="#a0a0a0"/><rect x="0.5" y="13" width="18" height="6.5" fill="#d0d0d0" stroke="#a0a0a0" stroke-width=".6"/><circle cx="3" cy="17" r="1" fill="#10b010"/><path d="M8 15 L12 15 M10 17.5 L13 17.5" stroke="#909090" stroke-width=".8"/><rect x="12.5" y="9.5" width="15" height="11" fill="#d8d8d8" stroke="#909090" stroke-width=".8"/><rect x="14" y="11" width="11" height="8" fill="#008080"/><path d="M14 11 L18 11 L16.5 14 L18 16.5 L16.5 19 L14 19Z" fill="#0000f0"/><rect x="27.5" y="10.5" width="1.5" height="10" fill="#a0a0a0"/><rect x="12.5" y="22" width="18" height="6.5" fill="#d0d0d0" stroke="#a0a0a0" stroke-width=".6"/><circle cx="15" cy="25.5" r="1" fill="#10b010"/><path d="M8.2 20 L8.2 26.5" stroke="#000" stroke-width="1.2"/><path d="M1 27.2 L12.5 27.2" stroke="#000" stroke-width="1.2"/><ellipse cx="8" cy="26.2" rx="2.5" ry="1.4" fill="#f0e000"/></svg>
<div class="a" style="left:805px;top:1005px;width:3px;height:32px;border-left:1px solid #808080;border-right:1px solid #fff"></div>
<div class="t" style="left:811px;top:1016px">Bureau</div>
<svg style="left:850px;top:1007px" width="16" height="15" viewBox="0 0 16 15"><path d="M1 3 L6 3 L7 1.5 L15 1.5 L15 13 L1 13Z" fill="#f0d070" stroke="#c8a040" stroke-width=".8"/><path d="M3 8 L13 8 L13 14 L10.5 14 L10.5 11 L5.5 11 L5.5 14 L3 14Z" fill="#5ab0e8" stroke="#2a80c0" stroke-width=".8"/><rect x="2" y="2.5" width="2" height="1" fill="#20b020"/></svg>
<div class="t" style="left:868px;top:1009px">Bibliothèques</div>
<svg style="left:1001px;top:1006px" width="15" height="15" viewBox="0 0 15 15"><path d="M1 1 L7 1 L7 15 L1 13.5Z" fill="#e8cc70"/><path d="M1 1 L4 2 L4 14 L1 13.5Z" fill="#f4e0a0"/><circle cx="9" cy="7" r="2.6" fill="#a06a40"/><path d="M5 15 C5 10 14 10 14 15Z" fill="#3aa078"/></svg>
<div class="t" style="left:1019px;top:1009px">David D’Hollanders</div>
<svg style="left:1152px;top:1006px" width="16" height="15" viewBox="0 0 16 15"><rect x="4.5" y="0.5" width="11" height="10" fill="#e8e8e8" stroke="#606060"/><rect x="6" y="2" width="8" height="7" fill="#1020c8"/><rect x="0.5" y="6" width="2.5" height="9" fill="#d8d8d8" stroke="#707070" stroke-width=".6"/><rect x="7" y="11" width="6" height="2" fill="#a0a0a0"/></svg>
<div class="t" style="left:1170px;top:1009px">Ordinateur</div>
<svg style="left:1303px;top:1005px" width="16" height="16" viewBox="0 0 16 16"><circle cx="5" cy="5" r="4.5" fill="#30a0e0"/><path d="M2 3 L5 2 L6 5 L3 7Z" fill="#40c040"/><rect x="6.5" y="6.5" width="9" height="7" fill="#e0e0e0" stroke="#606060"/><rect x="8" y="8" width="6" height="4" fill="#1020c8"/><rect x="10" y="14" width="2" height="2" fill="#606060"/></svg>
<div class="t" style="left:1320px;top:1009px">Réseau</div>
<svg style="left:1602px;top:1008px" width="9" height="6" viewBox="0 0 9 6"><path d="M0.5 0.5 L3 3 L0.5 5.5 M4.5 0.5 L7 3 L4.5 5.5" stroke="#000" stroke-width="1.5" fill="none"/></svg>
<div class="a" style="left:1616px;top:1005px;width:3px;height:32px;border-left:1px solid #808080;border-right:1px solid #fff"></div>
<div class="t" style="left:1627px;top:1014px;font-size:11.5px;letter-spacing:0">FR</div>
<div class="a" style="left:1645px;top:1009px;width:2px;height:20px;border-left:1px solid #808080;border-right:1px solid #fff"></div>
<svg style="left:1652px;top:1012px" width="17" height="15" viewBox="0 0 17 15"><rect x="0.5" y="6.5" width="16" height="8" rx="2" fill="#c8c8c8" stroke="#808080"/><path d="M3 9 L14 9 M3 11 L14 11 M4 13 L13 13" stroke="#f0f0f0" stroke-width="1" stroke-dasharray="1 1"/><path d="M8 6 C8 3 12 4 15 1" stroke="#808080" fill="none"/></svg>
<div class="a" style="left:1671px;top:1009px;width:2px;height:20px;border-left:1px solid #808080;border-right:1px solid #fff"></div>
<div class="a" style="left:1674px;top:1003px;width:165px;height:34px;border-top:1px solid #808080;border-left:1px solid #808080"></div>
<svg style="left:1680px;top:1015px" width="7" height="9" viewBox="0 0 7 9"><path d="M0.5 4 L3.5 1 L6.5 4 M0.5 8 L3.5 5 L6.5 8" stroke="#000" stroke-width="1.5" fill="none"/></svg>
<svg style="left:1696px;top:1013px" width="16" height="16" viewBox="0 0 16 16"><rect x="1" y="1" width="2" height="15" fill="#e8e8e8" stroke="#707070" stroke-width=".7"/><path d="M3 2 C6 0.5 8.5 3.5 15 2.5 L13.5 6 L15 9 C9 10 6.5 7 3 8.5Z" fill="#f4f4f4" stroke="#707070" stroke-width=".9"/></svg>
<svg style="left:1718px;top:1013px" width="16" height="16" viewBox="0 0 16 16"><rect x="4.5" y="4.5" width="11" height="9" fill="#d0d0d0" stroke="#707070"/><rect x="6" y="6" width="8" height="6" fill="#b0b0b0"/><rect x="7" y="14" width="6" height="1.5" fill="#909090"/><rect x="0.5" y="0.5" width="3.5" height="6" fill="#e8e8e8" stroke="#707070" stroke-width=".8"/><path d="M2.2 6.5 L2.2 15 L7 15" stroke="#707070" fill="none"/></svg>
<svg style="left:1741px;top:1013px" width="16" height="15" viewBox="0 0 16 15"><path d="M1 5 L4 5 L9 1 L9 14 L4 10 L1 10Z" fill="#e4e4e4" stroke="#808080"/><path d="M11 4 C13 6 13 9 11 11 M13 2 C16 5 16 10 13 13" stroke="#a0a0a0" fill="none" stroke-width="1.2"/></svg>
<div class="t" style="left:1780px;top:1009px;letter-spacing:0.15px">17:45</div>
<div class="t" style="left:1768px;top:1024px;letter-spacing:-0.1px">1/10/2018</div>
<svg style="left:1824px;top:1015px" width="15" height="13" viewBox="0 0 15 13"><rect x="0.5" y="0.5" width="15" height="12" fill="#2a70c8" stroke="#5a8ac8"/><rect x="1" y="1" width="14" height="5" fill="#4a9ae0"/><rect x="3" y="9" width="12" height="2" fill="#303030"/><circle cx="2" cy="10" r="1.2" fill="#e0a020"/></svg>
</body></html>
